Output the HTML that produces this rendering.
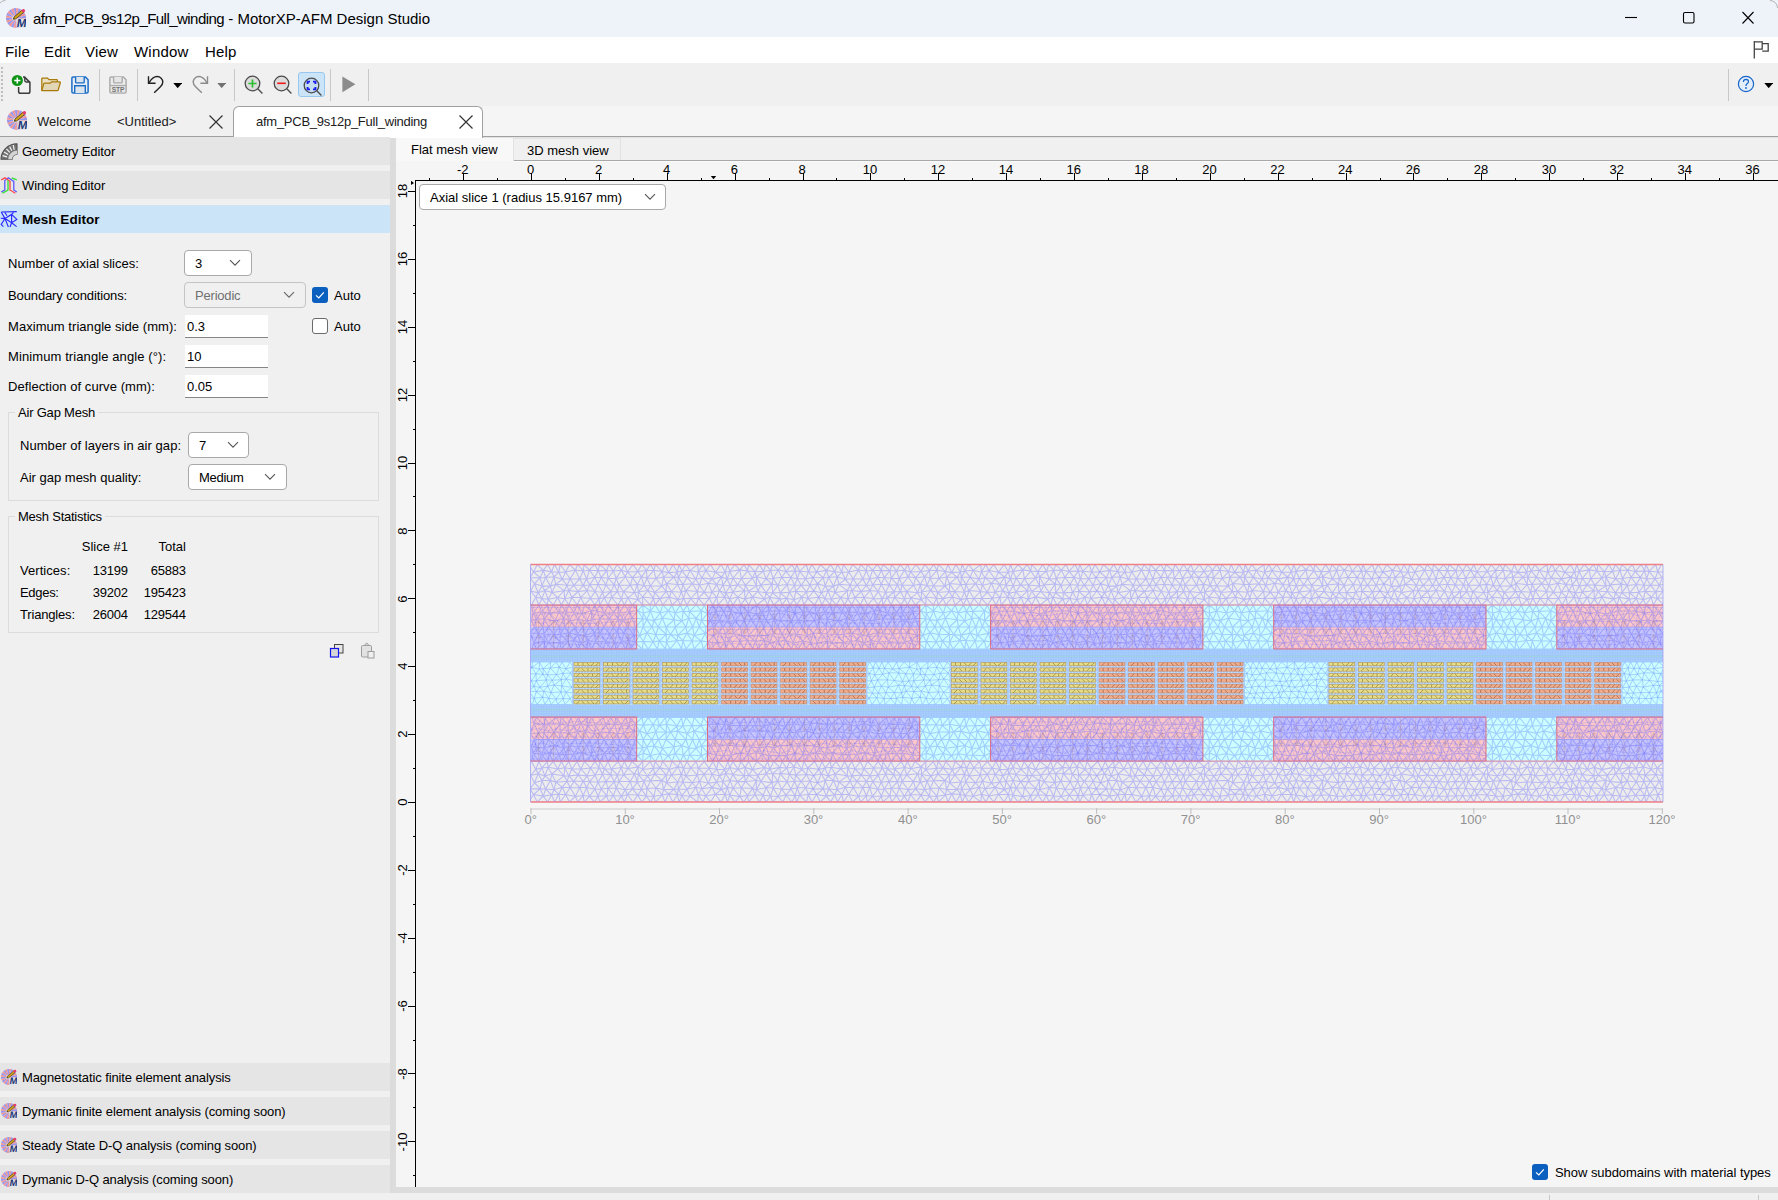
<!DOCTYPE html><html><head><meta charset="utf-8"><title>MotorXP-AFM Design Studio</title><style>
*{box-sizing:border-box;margin:0;padding:0}
html,body{width:1778px;height:1200px;overflow:hidden;background:#f0f0f0;font-family:"Liberation Sans",sans-serif;color:#000}
.abs{position:absolute}
.t{position:absolute;white-space:pre;font-size:13px;letter-spacing:0px;line-height:18px;color:#000}
#title{left:0;top:0;width:1778px;height:37px;background:#eef3fa}
#menu{left:0;top:37px;width:1778px;height:26px;background:#fff}
#tool{left:0;top:63px;width:1778px;height:43px;background:#f0f0f0}
.sep{position:absolute;top:69px;width:1px;height:32px;background:#c8c8c8}
.band{position:absolute;left:0;width:390px;height:28px;background:#e5e5e5}
.band .t{left:22px;top:6px}
.combo{position:absolute;background:#fff;border:1px solid #a8a8a8;border-radius:4px}
.combo.dis{background:#f0f0f0;border-color:#c4c4c4}
.inp{position:absolute;background:#fff;border-bottom:1px solid #868686;height:23px;width:83px}
.grp{position:absolute;border:1px solid #dcdcdc}
.cb{position:absolute;width:16px;height:16px;border-radius:3px}
</style></head><body><div style="position:relative;width:1778px;height:1200px;overflow:hidden">
<div id="title" class="abs"></div>
<svg class="abs" style="left:6px;top:8px" width="20" height="20" viewBox="0 0 20 20"><path d="M10 10L20.00 10.20A10 10 0 0 1 19.61 12.78Z" fill="#f09494"/><path d="M10 10L19.61 12.78A10 10 0 0 1 18.56 15.17Z" fill="#9696f0"/><path d="M10 10L18.56 15.17A10 10 0 0 1 16.93 17.21Z" fill="#f09494"/><path d="M10 10L16.93 17.21A10 10 0 0 1 14.83 18.76Z" fill="#9696f0"/><path d="M10 10L14.83 18.76A10 10 0 0 1 12.39 19.71Z" fill="#f09494"/><path d="M10 10L12.39 19.71A10 10 0 0 1 9.80 20.00Z" fill="#9696f0"/><path d="M10 10L9.80 20.00A10 10 0 0 1 7.22 19.61Z" fill="#f09494"/><path d="M10 10L7.22 19.61A10 10 0 0 1 4.83 18.56Z" fill="#9696f0"/><path d="M10 10L4.83 18.56A10 10 0 0 1 2.79 16.93Z" fill="#f09494"/><path d="M10 10L2.79 16.93A10 10 0 0 1 1.24 14.83Z" fill="#9696f0"/><path d="M10 10L1.24 14.83A10 10 0 0 1 0.29 12.39Z" fill="#f09494"/><path d="M10 10L0.29 12.39A10 10 0 0 1 0.00 9.80Z" fill="#9696f0"/><path d="M10 10L0.00 9.80A10 10 0 0 1 0.39 7.22Z" fill="#f09494"/><path d="M10 10L0.39 7.22A10 10 0 0 1 1.44 4.83Z" fill="#9696f0"/><path d="M10 10L1.44 4.83A10 10 0 0 1 3.07 2.79Z" fill="#f09494"/><path d="M10 10L3.07 2.79A10 10 0 0 1 5.17 1.24Z" fill="#9696f0"/><path d="M10 10L5.17 1.24A10 10 0 0 1 7.61 0.29Z" fill="#f09494"/><path d="M10 10L7.61 0.29A10 10 0 0 1 10.20 0.00Z" fill="#9696f0"/><path d="M10 10L10.20 0.00A10 10 0 0 1 12.78 0.39Z" fill="#f09494"/><path d="M10 10L12.78 0.39A10 10 0 0 1 15.17 1.44Z" fill="#9696f0"/><path d="M10 10L15.17 1.44A10 10 0 0 1 17.21 3.07Z" fill="#f09494"/><path d="M10 10L17.21 3.07A10 10 0 0 1 18.76 5.17Z" fill="#9696f0"/><path d="M10 10L18.76 5.17A10 10 0 0 1 19.71 7.61Z" fill="#f09494"/><path d="M10 10L19.71 7.61A10 10 0 0 1 20.00 10.20Z" fill="#9696f0"/><circle cx="8.3" cy="10.2" r="2.3" fill="#e4e4ea"/><rect x="10.3" y="10.6" width="9.7" height="9.2" fill="#e4e4e6"/><text x="13.4" y="19.3" transform="skewX(-9)" font-family="Liberation Sans" font-weight="700" font-size="11.8" fill="#1e3a7a">M</text><path d="M15.6 2.6L17.6 4.6L9.6 11L7.3 11.2L8 9Z" fill="#d4a21a" stroke="#4a3c14" stroke-width="0.8" stroke-linejoin="round"/><path d="M7.3 11.2L7.7 9.9L8.8 10.9Z" fill="#2a2a2a"/><circle cx="17.4" cy="2.7" r="1.7" fill="#e83c70"/></svg>
<div class="t" style="left:33px;top:9px;font-size:15px;letter-spacing:0px;line-height:20px"><span style="letter-spacing:-0.54px">afm_PCB_9s12p_Full_winding</span> - MotorXP-AFM Design Studio</div>
<svg class="abs" style="left:1620px;top:8px" width="150" height="22" viewBox="0 0 150 22"><path d="M5 9.5H17" stroke="#000" stroke-width="1.1"/><rect x="63.5" y="4.5" width="10.5" height="10.5" rx="1.5" fill="none" stroke="#000" stroke-width="1.1"/><path d="M122.5 4L133.5 15.5M133.5 4L122.5 15.5" stroke="#000" stroke-width="1.1"/></svg>
<svg class="abs" style="left:0;top:0" width="1778" height="10" viewBox="0 0 1778 10"><path d="M0 3Q1.6 0.9 5.6 0.2M1770 0.5A7.5 7.5 0 0 1 1777.5 8" fill="none" stroke="#b4b4b4" stroke-width="1"/></svg>
<div id="menu" class="abs"></div>
<div class="t" style="left:5px;top:42px;font-size:15px;letter-spacing:0.2px;line-height:20px">File</div>
<div class="t" style="left:44px;top:42px;font-size:15px;letter-spacing:0.2px;line-height:20px">Edit</div>
<div class="t" style="left:85px;top:42px;font-size:15px;letter-spacing:0.2px;line-height:20px">View</div>
<div class="t" style="left:134px;top:42px;font-size:15px;letter-spacing:0.2px;line-height:20px">Window</div>
<div class="t" style="left:205px;top:42px;font-size:15px;letter-spacing:0.2px;line-height:20px">Help</div>
<svg class="abs" style="left:1750px;top:39px" width="22" height="22" viewBox="0 0 22 22"><path d="M4.3 2V19.5" stroke="#444" stroke-width="1.3"/><path d="M4.3 2.8H12.2V10.2H4.3" fill="none" stroke="#444" stroke-width="1.3"/><path d="M12.2 4.6H18.2V12.2H12.2" fill="none" stroke="#444" stroke-width="1.3"/></svg>
<div id="tool" class="abs"></div>
<div class="abs" style="left:1px;top:67px;width:2px;height:34px;background:repeating-linear-gradient(#bdbdbd 0 2px,#f0f0f0 2px 4px)"></div>
<svg class="abs" style="left:11.3px;top:73.7px" width="22" height="22" viewBox="0 0 22 22"><path d="M12 3.1H13.6L18.9 8.4V17.4Q18.9 19.2 17.1 19.2H9.4Q7.6 19.2 7.6 17.4V13" fill="none" stroke="#3c3c3c" stroke-width="1.5"/><path d="M13.8 3.4V6.6Q13.8 8 15.2 8H18.6" fill="none" stroke="#3c3c3c" stroke-width="1.4"/><circle cx="6.3" cy="6.5" r="5.6" fill="#0f9416"/><path d="M6.3 3.4V9.6M3.2 6.5H9.4" stroke="#fff" stroke-width="1.5"/></svg>
<svg class="abs" style="left:40px;top:76px" width="22" height="18" viewBox="0 0 22 18"><path d="M1.8 14.6V2.8Q1.8 2 2.6 2H7.4L9 3.6H16.6Q17.4 3.6 17.4 4.4V6.4" fill="#eae0c4" stroke="#a87a08" stroke-width="1.25" stroke-linejoin="round"/><path d="M1.8 14.6L3.8 7.6Q4 7 4.7 7H10.4L11.8 5.8H19.6Q20.6 5.8 20.3 6.8L18.2 14Q18 14.6 17.3 14.6Z" fill="#e2d6b6" stroke="#a87a08" stroke-width="1.25" stroke-linejoin="round"/></svg>
<svg class="abs" style="left:71px;top:76px" width="18" height="18" viewBox="0 0 18 18"><path d="M2 0.9H14.2L17.1 3.8V15.8Q17.1 17.1 15.8 17.1H2.2Q0.9 17.1 0.9 15.8V2Q0.9 0.9 2 0.9Z" fill="#e6ecf4" stroke="#1e6ec8" stroke-width="1.5" stroke-linejoin="round"/><path d="M4.6 1V5.9Q4.6 6.9 5.6 6.9H12.2Q13.2 6.9 13.2 5.9V1" fill="#dce4ee" stroke="#1e6ec8" stroke-width="1.4"/><path d="M3.7 17V9.8H14.3V17" fill="#dce4ee" stroke="#1e6ec8" stroke-width="1.4"/></svg>
<div class="sep" style="left:99px"></div>
<svg class="abs" style="left:109px;top:76px" width="18" height="18" viewBox="0 0 18 18"><path d="M2 0.9H14.2L17.1 3.8V15.8Q17.1 17.1 15.8 17.1H2.2Q0.9 17.1 0.9 15.8V2Q0.9 0.9 2 0.9Z" fill="#ececec" stroke="#acacac" stroke-width="1.5" stroke-linejoin="round"/><path d="M4.6 1V5.9Q4.6 6.9 5.6 6.9H12.2Q13.2 6.9 13.2 5.9V1" fill="#e6e6e6" stroke="#acacac" stroke-width="1.4"/><path d="M1 9.6H17" stroke="#acacac" stroke-width="1.4"/><rect x="2.2" y="10.6" width="13.6" height="5.6" fill="#e6e6e6"/><text x="9" y="15.9" text-anchor="middle" font-family="Liberation Sans" font-weight="700" font-size="6.7" letter-spacing="-0.25" fill="#727272">STP</text></svg>
<div class="sep" style="left:137px"></div>
<svg class="abs" style="left:146px;top:75px" width="20" height="20" viewBox="0 0 20 20"><g><path d="M2.5 1.2V8.2H9.6" fill="none" stroke="#222" stroke-width="1.4"/><path d="M3 7.8Q6.6 1.5 11.2 1.5A5.6 5.6 0 0 1 16.8 7.1Q16.8 9.6 14.4 11.8L8.2 17.8" fill="none" stroke="#222" stroke-width="1.4"/></g></svg>
<svg class="abs" style="left:172.8px;top:82.8px" width="9.4" height="5.3" viewBox="0 0 10 6"><path d="M0 0H10L5 5.8Z" fill="#000"/></svg>
<svg class="abs" style="left:190px;top:75px" width="20" height="20" viewBox="0 0 20 20"><g transform="translate(20,0) scale(-1,1)"><path d="M2.5 1.2V8.2H9.6" fill="none" stroke="#8a8a8a" stroke-width="1.4"/><path d="M3 7.8Q6.6 1.5 11.2 1.5A5.6 5.6 0 0 1 16.8 7.1Q16.8 9.6 14.4 11.8L8.2 17.8" fill="none" stroke="#8a8a8a" stroke-width="1.4"/></g></svg>
<svg class="abs" style="left:216.9px;top:82.8px" width="9.4" height="5.3" viewBox="0 0 10 6"><path d="M0 0H10L5 5.8Z" fill="#727272"/></svg>
<div class="sep" style="left:234px"></div>
<svg class="abs" style="left:243.6px;top:75.1px" width="22" height="22" viewBox="0 0 22 22"><circle cx="8.5" cy="8.5" r="7.3" fill="#dcdcdc" stroke="#4a4a4a" stroke-width="1.3"/><path d="M13.8 13.8L18.4 18.4" stroke="#4a4a4a" stroke-width="1.35"/><path d="M8.5 4.4V12.6M4.4 8.5H12.6" stroke="#2bc02b" stroke-width="1.7"/></svg>
<svg class="abs" style="left:272.6px;top:75.1px" width="22" height="22" viewBox="0 0 22 22"><circle cx="8.5" cy="8.5" r="7.3" fill="#dcdcdc" stroke="#4a4a4a" stroke-width="1.3"/><path d="M13.8 13.8L18.4 18.4" stroke="#4a4a4a" stroke-width="1.35"/><path d="M4.2 8.3H12.8" stroke="#f01818" stroke-width="1.6"/></svg>
<div class="abs" style="left:298px;top:72px;width:27px;height:25px;background:#cce4f7;border:1px solid #98c8ef;border-radius:3px"></div>
<svg class="abs" style="left:302.7px;top:76.6px" width="22" height="22" viewBox="0 0 22 22"><circle cx="8.5" cy="8.5" r="7.3" fill="#c4dcf0" stroke="#4a4a4a" stroke-width="1.3"/><path d="M13.8 13.8L18.4 18.4" stroke="#4a4a4a" stroke-width="1.35"/><path d="M4.6 7V4.6H7M10 4.6H12.4V7M12.4 10V12.4H10M7 12.4H4.6V10" fill="none" stroke="#1a1af0" stroke-width="1.9"/></svg>
<div class="sep" style="left:330px"></div>
<svg class="abs" style="left:342px;top:76px" width="14" height="17" viewBox="0 0 14 17"><path d="M0.4 0.4L13.4 8.3L0.4 16.2Z" fill="#8c8c8c"/></svg>
<div class="sep" style="left:368px"></div>
<div class="sep" style="left:1728px"></div>
<svg class="abs" style="left:1737px;top:75px" width="18" height="18" viewBox="0 0 18 18"><circle cx="9" cy="9" r="7.6" fill="#e4eefa" stroke="#1565c8" stroke-width="1.2"/><path d="M6.4 6.9Q6.5 4.4 9 4.4Q11.5 4.5 11.5 6.6Q11.5 7.9 10 8.8Q9 9.5 9 10.9" fill="none" stroke="#1565c8" stroke-width="1.2"/><circle cx="9" cy="13" r="0.9" fill="#1565c8"/></svg>
<svg class="abs" style="left:1763.5px;top:83px" width="9.4" height="5.3" viewBox="0 0 10 6"><path d="M0 0H10L5 5.8Z" fill="#000"/></svg>
<div class="abs" style="left:0;top:106px;width:1778px;height:31px;background:#f0f0f0"></div>
<div class="abs" style="left:483px;top:106px;width:1295px;height:30px;background:#f5f5f5"></div>
<div class="abs" style="left:0;top:136px;width:1778px;height:1px;background:#a0a0a0"></div>
<div class="abs" style="left:0;top:137px;width:1778px;height:1px;background:#e3e3e3"></div>
<svg class="abs" style="left:7px;top:110px" width="20" height="20" viewBox="0 0 20 20"><path d="M10 10L20.00 10.20A10 10 0 0 1 19.61 12.78Z" fill="#f09494"/><path d="M10 10L19.61 12.78A10 10 0 0 1 18.56 15.17Z" fill="#9696f0"/><path d="M10 10L18.56 15.17A10 10 0 0 1 16.93 17.21Z" fill="#f09494"/><path d="M10 10L16.93 17.21A10 10 0 0 1 14.83 18.76Z" fill="#9696f0"/><path d="M10 10L14.83 18.76A10 10 0 0 1 12.39 19.71Z" fill="#f09494"/><path d="M10 10L12.39 19.71A10 10 0 0 1 9.80 20.00Z" fill="#9696f0"/><path d="M10 10L9.80 20.00A10 10 0 0 1 7.22 19.61Z" fill="#f09494"/><path d="M10 10L7.22 19.61A10 10 0 0 1 4.83 18.56Z" fill="#9696f0"/><path d="M10 10L4.83 18.56A10 10 0 0 1 2.79 16.93Z" fill="#f09494"/><path d="M10 10L2.79 16.93A10 10 0 0 1 1.24 14.83Z" fill="#9696f0"/><path d="M10 10L1.24 14.83A10 10 0 0 1 0.29 12.39Z" fill="#f09494"/><path d="M10 10L0.29 12.39A10 10 0 0 1 0.00 9.80Z" fill="#9696f0"/><path d="M10 10L0.00 9.80A10 10 0 0 1 0.39 7.22Z" fill="#f09494"/><path d="M10 10L0.39 7.22A10 10 0 0 1 1.44 4.83Z" fill="#9696f0"/><path d="M10 10L1.44 4.83A10 10 0 0 1 3.07 2.79Z" fill="#f09494"/><path d="M10 10L3.07 2.79A10 10 0 0 1 5.17 1.24Z" fill="#9696f0"/><path d="M10 10L5.17 1.24A10 10 0 0 1 7.61 0.29Z" fill="#f09494"/><path d="M10 10L7.61 0.29A10 10 0 0 1 10.20 0.00Z" fill="#9696f0"/><path d="M10 10L10.20 0.00A10 10 0 0 1 12.78 0.39Z" fill="#f09494"/><path d="M10 10L12.78 0.39A10 10 0 0 1 15.17 1.44Z" fill="#9696f0"/><path d="M10 10L15.17 1.44A10 10 0 0 1 17.21 3.07Z" fill="#f09494"/><path d="M10 10L17.21 3.07A10 10 0 0 1 18.76 5.17Z" fill="#9696f0"/><path d="M10 10L18.76 5.17A10 10 0 0 1 19.71 7.61Z" fill="#f09494"/><path d="M10 10L19.71 7.61A10 10 0 0 1 20.00 10.20Z" fill="#9696f0"/><circle cx="8.3" cy="10.2" r="2.3" fill="#e4e4ea"/><rect x="10.3" y="10.6" width="9.7" height="9.2" fill="#e4e4e6"/><text x="13.4" y="19.3" transform="skewX(-9)" font-family="Liberation Sans" font-weight="700" font-size="11.8" fill="#1e3a7a">M</text><path d="M15.6 2.6L17.6 4.6L9.6 11L7.3 11.2L8 9Z" fill="#d4a21a" stroke="#4a3c14" stroke-width="0.8" stroke-linejoin="round"/><path d="M7.3 11.2L7.7 9.9L8.8 10.9Z" fill="#2a2a2a"/><circle cx="17.4" cy="2.7" r="1.7" fill="#e83c70"/></svg>
<div class="t" style="left:37px;top:113px;color:#202020">Welcome</div>
<div class="t" style="left:117px;top:113px;color:#202020">&lt;Untitled&gt;</div>
<svg class="abs" style="left:209px;top:115px" width="14" height="14" viewBox="0 0 14 14"><path d="M0.5 0.5L13.5 13.5M13.5 0.5L0.5 13.5" stroke="#333" stroke-width="1.2"/></svg>
<div class="abs" style="left:233px;top:106px;width:250px;height:32px;background:#fff;border:1px solid #a0a0a0;border-bottom:none;border-radius:6px 6px 0 0"></div>
<div class="t" style="left:256px;top:113px;letter-spacing:-0.26px;color:#202020">afm_PCB_9s12p_Full_winding</div>
<svg class="abs" style="left:459px;top:115px" width="14" height="14" viewBox="0 0 14 14"><path d="M0.5 0.5L13.5 13.5M13.5 0.5L0.5 13.5" stroke="#333" stroke-width="1.2"/></svg>
<div class="abs" style="left:0;top:138px;width:390px;height:1055px;background:#f0f0f0"></div>
<div class="band" style="top:137px;background:#e5e5e5"><div class="t" style="letter-spacing:-0.1px">Geometry Editor</div></div>
<svg class="abs" style="left:0px;top:143px" width="18" height="17" viewBox="0 0 18 17"><path d="M1 16.2A16 15.5 0 0 1 17 0.8V11.2A5.5 5 0 0 0 12.2 16.2Z" fill="#747474" stroke="#505050" stroke-width="1.1" stroke-linejoin="round"/><path d="M8.2 16.2A9 8.6 0 0 1 17 7.6V11.2A5.5 5 0 0 0 12.2 16.2Z" fill="#d4d4d4"/><path d="M2.6 12.6L7 13.8M4 9L8.2 11.4M6.4 5.8L9.8 9.4M9.6 3.4L11.8 7.8M13.2 2L14.2 6.8" stroke="#f4f4f4" stroke-width="1.2"/></svg>
<div class="band" style="top:171px;background:#e5e5e5"><div class="t" style="letter-spacing:-0.1px">Winding Editor</div></div>
<svg class="abs" style="left:0px;top:177px" width="18" height="17" viewBox="0 0 18 17"><path d="M1.2 15L4.8 13V3.6L8.4 0.8L13.8 4.4V13L16.8 15" fill="none" stroke="#5a5aff" stroke-width="1.3"/><path d="M1.2 2.8L5 0.8L10 4.4V13L15.4 16.2" fill="none" stroke="#ff4a4a" stroke-width="1.3"/><path d="M2.4 16.2L8 13V3.6M11.8 0.8L16.8 2.8" fill="none" stroke="#30e030" stroke-width="1.3"/></svg>
<div class="band" style="top:205px;background:#cce4f7"><div class="t" style="font-weight:700;font-size:13.5px;letter-spacing:0.02px">Mesh Editor</div></div>
<svg class="abs" style="left:0px;top:211px" width="18" height="17" viewBox="0 0 18 17"><path d="M1.2 1L16.8 0.6M1.2 1L5 7.6L1.2 13.4L3.4 15.6M5 7.6L11.6 3.4V11.8L5 7.6M5 7.6L8.4 16M11.6 3.4L16.8 8.4L11.6 11.8L16.6 15.6M11.6 3.4L14 0.8M5 7.6L0.8 7.2M11.6 11.8L10 16M4.6 1L7 4.8" fill="none" stroke="#2a2aff" stroke-width="1.15"/></svg>
<div class="band" style="top:1063px;background:#e5e5e5"><div class="t" style="letter-spacing:-0.1px">Magnetostatic finite element analysis</div></div>
<svg class="abs" style="left:1px;top:1069px" width="16" height="16" viewBox="0 0 20 20"><path d="M10 10L20.00 10.20A10 10 0 0 1 19.61 12.78Z" fill="#f09494"/><path d="M10 10L19.61 12.78A10 10 0 0 1 18.56 15.17Z" fill="#9696f0"/><path d="M10 10L18.56 15.17A10 10 0 0 1 16.93 17.21Z" fill="#f09494"/><path d="M10 10L16.93 17.21A10 10 0 0 1 14.83 18.76Z" fill="#9696f0"/><path d="M10 10L14.83 18.76A10 10 0 0 1 12.39 19.71Z" fill="#f09494"/><path d="M10 10L12.39 19.71A10 10 0 0 1 9.80 20.00Z" fill="#9696f0"/><path d="M10 10L9.80 20.00A10 10 0 0 1 7.22 19.61Z" fill="#f09494"/><path d="M10 10L7.22 19.61A10 10 0 0 1 4.83 18.56Z" fill="#9696f0"/><path d="M10 10L4.83 18.56A10 10 0 0 1 2.79 16.93Z" fill="#f09494"/><path d="M10 10L2.79 16.93A10 10 0 0 1 1.24 14.83Z" fill="#9696f0"/><path d="M10 10L1.24 14.83A10 10 0 0 1 0.29 12.39Z" fill="#f09494"/><path d="M10 10L0.29 12.39A10 10 0 0 1 0.00 9.80Z" fill="#9696f0"/><path d="M10 10L0.00 9.80A10 10 0 0 1 0.39 7.22Z" fill="#f09494"/><path d="M10 10L0.39 7.22A10 10 0 0 1 1.44 4.83Z" fill="#9696f0"/><path d="M10 10L1.44 4.83A10 10 0 0 1 3.07 2.79Z" fill="#f09494"/><path d="M10 10L3.07 2.79A10 10 0 0 1 5.17 1.24Z" fill="#9696f0"/><path d="M10 10L5.17 1.24A10 10 0 0 1 7.61 0.29Z" fill="#f09494"/><path d="M10 10L7.61 0.29A10 10 0 0 1 10.20 0.00Z" fill="#9696f0"/><path d="M10 10L10.20 0.00A10 10 0 0 1 12.78 0.39Z" fill="#f09494"/><path d="M10 10L12.78 0.39A10 10 0 0 1 15.17 1.44Z" fill="#9696f0"/><path d="M10 10L15.17 1.44A10 10 0 0 1 17.21 3.07Z" fill="#f09494"/><path d="M10 10L17.21 3.07A10 10 0 0 1 18.76 5.17Z" fill="#9696f0"/><path d="M10 10L18.76 5.17A10 10 0 0 1 19.71 7.61Z" fill="#f09494"/><path d="M10 10L19.71 7.61A10 10 0 0 1 20.00 10.20Z" fill="#9696f0"/><circle cx="8.3" cy="10.2" r="2.3" fill="#e4e4ea"/><rect x="10.3" y="10.6" width="9.7" height="9.2" fill="#e4e4e6"/><text x="13.4" y="19.3" transform="skewX(-9)" font-family="Liberation Sans" font-weight="700" font-size="11.8" fill="#1e3a7a">M</text><path d="M15.6 2.6L17.6 4.6L9.6 11L7.3 11.2L8 9Z" fill="#d4a21a" stroke="#4a3c14" stroke-width="0.8" stroke-linejoin="round"/><path d="M7.3 11.2L7.7 9.9L8.8 10.9Z" fill="#2a2a2a"/><circle cx="17.4" cy="2.7" r="1.7" fill="#e83c70"/></svg>
<div class="band" style="top:1097px;background:#e5e5e5"><div class="t" style="letter-spacing:-0.1px">Dymanic finite element analysis (coming soon)</div></div>
<svg class="abs" style="left:1px;top:1103px" width="16" height="16" viewBox="0 0 20 20"><path d="M10 10L20.00 10.20A10 10 0 0 1 19.61 12.78Z" fill="#f09494"/><path d="M10 10L19.61 12.78A10 10 0 0 1 18.56 15.17Z" fill="#9696f0"/><path d="M10 10L18.56 15.17A10 10 0 0 1 16.93 17.21Z" fill="#f09494"/><path d="M10 10L16.93 17.21A10 10 0 0 1 14.83 18.76Z" fill="#9696f0"/><path d="M10 10L14.83 18.76A10 10 0 0 1 12.39 19.71Z" fill="#f09494"/><path d="M10 10L12.39 19.71A10 10 0 0 1 9.80 20.00Z" fill="#9696f0"/><path d="M10 10L9.80 20.00A10 10 0 0 1 7.22 19.61Z" fill="#f09494"/><path d="M10 10L7.22 19.61A10 10 0 0 1 4.83 18.56Z" fill="#9696f0"/><path d="M10 10L4.83 18.56A10 10 0 0 1 2.79 16.93Z" fill="#f09494"/><path d="M10 10L2.79 16.93A10 10 0 0 1 1.24 14.83Z" fill="#9696f0"/><path d="M10 10L1.24 14.83A10 10 0 0 1 0.29 12.39Z" fill="#f09494"/><path d="M10 10L0.29 12.39A10 10 0 0 1 0.00 9.80Z" fill="#9696f0"/><path d="M10 10L0.00 9.80A10 10 0 0 1 0.39 7.22Z" fill="#f09494"/><path d="M10 10L0.39 7.22A10 10 0 0 1 1.44 4.83Z" fill="#9696f0"/><path d="M10 10L1.44 4.83A10 10 0 0 1 3.07 2.79Z" fill="#f09494"/><path d="M10 10L3.07 2.79A10 10 0 0 1 5.17 1.24Z" fill="#9696f0"/><path d="M10 10L5.17 1.24A10 10 0 0 1 7.61 0.29Z" fill="#f09494"/><path d="M10 10L7.61 0.29A10 10 0 0 1 10.20 0.00Z" fill="#9696f0"/><path d="M10 10L10.20 0.00A10 10 0 0 1 12.78 0.39Z" fill="#f09494"/><path d="M10 10L12.78 0.39A10 10 0 0 1 15.17 1.44Z" fill="#9696f0"/><path d="M10 10L15.17 1.44A10 10 0 0 1 17.21 3.07Z" fill="#f09494"/><path d="M10 10L17.21 3.07A10 10 0 0 1 18.76 5.17Z" fill="#9696f0"/><path d="M10 10L18.76 5.17A10 10 0 0 1 19.71 7.61Z" fill="#f09494"/><path d="M10 10L19.71 7.61A10 10 0 0 1 20.00 10.20Z" fill="#9696f0"/><circle cx="8.3" cy="10.2" r="2.3" fill="#e4e4ea"/><rect x="10.3" y="10.6" width="9.7" height="9.2" fill="#e4e4e6"/><text x="13.4" y="19.3" transform="skewX(-9)" font-family="Liberation Sans" font-weight="700" font-size="11.8" fill="#1e3a7a">M</text><path d="M15.6 2.6L17.6 4.6L9.6 11L7.3 11.2L8 9Z" fill="#d4a21a" stroke="#4a3c14" stroke-width="0.8" stroke-linejoin="round"/><path d="M7.3 11.2L7.7 9.9L8.8 10.9Z" fill="#2a2a2a"/><circle cx="17.4" cy="2.7" r="1.7" fill="#e83c70"/></svg>
<div class="band" style="top:1131px;background:#e5e5e5"><div class="t" style="letter-spacing:-0.1px">Steady State D-Q analysis (coming soon)</div></div>
<svg class="abs" style="left:1px;top:1137px" width="16" height="16" viewBox="0 0 20 20"><path d="M10 10L20.00 10.20A10 10 0 0 1 19.61 12.78Z" fill="#f09494"/><path d="M10 10L19.61 12.78A10 10 0 0 1 18.56 15.17Z" fill="#9696f0"/><path d="M10 10L18.56 15.17A10 10 0 0 1 16.93 17.21Z" fill="#f09494"/><path d="M10 10L16.93 17.21A10 10 0 0 1 14.83 18.76Z" fill="#9696f0"/><path d="M10 10L14.83 18.76A10 10 0 0 1 12.39 19.71Z" fill="#f09494"/><path d="M10 10L12.39 19.71A10 10 0 0 1 9.80 20.00Z" fill="#9696f0"/><path d="M10 10L9.80 20.00A10 10 0 0 1 7.22 19.61Z" fill="#f09494"/><path d="M10 10L7.22 19.61A10 10 0 0 1 4.83 18.56Z" fill="#9696f0"/><path d="M10 10L4.83 18.56A10 10 0 0 1 2.79 16.93Z" fill="#f09494"/><path d="M10 10L2.79 16.93A10 10 0 0 1 1.24 14.83Z" fill="#9696f0"/><path d="M10 10L1.24 14.83A10 10 0 0 1 0.29 12.39Z" fill="#f09494"/><path d="M10 10L0.29 12.39A10 10 0 0 1 0.00 9.80Z" fill="#9696f0"/><path d="M10 10L0.00 9.80A10 10 0 0 1 0.39 7.22Z" fill="#f09494"/><path d="M10 10L0.39 7.22A10 10 0 0 1 1.44 4.83Z" fill="#9696f0"/><path d="M10 10L1.44 4.83A10 10 0 0 1 3.07 2.79Z" fill="#f09494"/><path d="M10 10L3.07 2.79A10 10 0 0 1 5.17 1.24Z" fill="#9696f0"/><path d="M10 10L5.17 1.24A10 10 0 0 1 7.61 0.29Z" fill="#f09494"/><path d="M10 10L7.61 0.29A10 10 0 0 1 10.20 0.00Z" fill="#9696f0"/><path d="M10 10L10.20 0.00A10 10 0 0 1 12.78 0.39Z" fill="#f09494"/><path d="M10 10L12.78 0.39A10 10 0 0 1 15.17 1.44Z" fill="#9696f0"/><path d="M10 10L15.17 1.44A10 10 0 0 1 17.21 3.07Z" fill="#f09494"/><path d="M10 10L17.21 3.07A10 10 0 0 1 18.76 5.17Z" fill="#9696f0"/><path d="M10 10L18.76 5.17A10 10 0 0 1 19.71 7.61Z" fill="#f09494"/><path d="M10 10L19.71 7.61A10 10 0 0 1 20.00 10.20Z" fill="#9696f0"/><circle cx="8.3" cy="10.2" r="2.3" fill="#e4e4ea"/><rect x="10.3" y="10.6" width="9.7" height="9.2" fill="#e4e4e6"/><text x="13.4" y="19.3" transform="skewX(-9)" font-family="Liberation Sans" font-weight="700" font-size="11.8" fill="#1e3a7a">M</text><path d="M15.6 2.6L17.6 4.6L9.6 11L7.3 11.2L8 9Z" fill="#d4a21a" stroke="#4a3c14" stroke-width="0.8" stroke-linejoin="round"/><path d="M7.3 11.2L7.7 9.9L8.8 10.9Z" fill="#2a2a2a"/><circle cx="17.4" cy="2.7" r="1.7" fill="#e83c70"/></svg>
<div class="band" style="top:1165px;background:#e5e5e5"><div class="t" style="letter-spacing:-0.1px">Dymanic D-Q analysis (coming soon)</div></div>
<svg class="abs" style="left:1px;top:1171px" width="16" height="16" viewBox="0 0 20 20"><path d="M10 10L20.00 10.20A10 10 0 0 1 19.61 12.78Z" fill="#f09494"/><path d="M10 10L19.61 12.78A10 10 0 0 1 18.56 15.17Z" fill="#9696f0"/><path d="M10 10L18.56 15.17A10 10 0 0 1 16.93 17.21Z" fill="#f09494"/><path d="M10 10L16.93 17.21A10 10 0 0 1 14.83 18.76Z" fill="#9696f0"/><path d="M10 10L14.83 18.76A10 10 0 0 1 12.39 19.71Z" fill="#f09494"/><path d="M10 10L12.39 19.71A10 10 0 0 1 9.80 20.00Z" fill="#9696f0"/><path d="M10 10L9.80 20.00A10 10 0 0 1 7.22 19.61Z" fill="#f09494"/><path d="M10 10L7.22 19.61A10 10 0 0 1 4.83 18.56Z" fill="#9696f0"/><path d="M10 10L4.83 18.56A10 10 0 0 1 2.79 16.93Z" fill="#f09494"/><path d="M10 10L2.79 16.93A10 10 0 0 1 1.24 14.83Z" fill="#9696f0"/><path d="M10 10L1.24 14.83A10 10 0 0 1 0.29 12.39Z" fill="#f09494"/><path d="M10 10L0.29 12.39A10 10 0 0 1 0.00 9.80Z" fill="#9696f0"/><path d="M10 10L0.00 9.80A10 10 0 0 1 0.39 7.22Z" fill="#f09494"/><path d="M10 10L0.39 7.22A10 10 0 0 1 1.44 4.83Z" fill="#9696f0"/><path d="M10 10L1.44 4.83A10 10 0 0 1 3.07 2.79Z" fill="#f09494"/><path d="M10 10L3.07 2.79A10 10 0 0 1 5.17 1.24Z" fill="#9696f0"/><path d="M10 10L5.17 1.24A10 10 0 0 1 7.61 0.29Z" fill="#f09494"/><path d="M10 10L7.61 0.29A10 10 0 0 1 10.20 0.00Z" fill="#9696f0"/><path d="M10 10L10.20 0.00A10 10 0 0 1 12.78 0.39Z" fill="#f09494"/><path d="M10 10L12.78 0.39A10 10 0 0 1 15.17 1.44Z" fill="#9696f0"/><path d="M10 10L15.17 1.44A10 10 0 0 1 17.21 3.07Z" fill="#f09494"/><path d="M10 10L17.21 3.07A10 10 0 0 1 18.76 5.17Z" fill="#9696f0"/><path d="M10 10L18.76 5.17A10 10 0 0 1 19.71 7.61Z" fill="#f09494"/><path d="M10 10L19.71 7.61A10 10 0 0 1 20.00 10.20Z" fill="#9696f0"/><circle cx="8.3" cy="10.2" r="2.3" fill="#e4e4ea"/><rect x="10.3" y="10.6" width="9.7" height="9.2" fill="#e4e4e6"/><text x="13.4" y="19.3" transform="skewX(-9)" font-family="Liberation Sans" font-weight="700" font-size="11.8" fill="#1e3a7a">M</text><path d="M15.6 2.6L17.6 4.6L9.6 11L7.3 11.2L8 9Z" fill="#d4a21a" stroke="#4a3c14" stroke-width="0.8" stroke-linejoin="round"/><path d="M7.3 11.2L7.7 9.9L8.8 10.9Z" fill="#2a2a2a"/><circle cx="17.4" cy="2.7" r="1.7" fill="#e83c70"/></svg>
<div class="t" style="left:8px;top:255px">Number of axial slices:</div>
<div class="combo" style="left:184px;top:250px;width:68px;height:26px"><div class="t" style="left:10px;top:4px">3</div></div><svg class="abs" style="left:229px;top:259px" width="12" height="8" viewBox="0 0 12 8"><path d="M1 1.2L6 6.2L11 1.2" fill="none" stroke="#555" stroke-width="1.1"/></svg>
<div class="t" style="left:8px;top:287px;letter-spacing:-0.12px">Boundary conditions:</div>
<div class="combo dis" style="left:184px;top:282px;width:122px;height:26px"><div class="t" style="left:10px;top:4px;color:#707070;letter-spacing:-0.2px">Periodic</div></div><svg class="abs" style="left:283px;top:291px" width="12" height="8" viewBox="0 0 12 8"><path d="M1 1.2L6 6.2L11 1.2" fill="none" stroke="#666" stroke-width="1.1"/></svg>
<div class="cb" style="left:312px;top:287px;background:#0a5fbf"></div><svg class="abs" style="left:312px;top:287px" width="16" height="16" viewBox="0 0 16 16"><path d="M4 8.4L6.8 11L11.8 5.4" fill="none" stroke="#fff" stroke-width="1.2"/></svg>
<div class="t" style="left:334px;top:287px">Auto</div>
<div class="t" style="left:8px;top:318px;letter-spacing:0.05px">Maximum triangle side (mm):</div>
<div class="inp" style="left:185px;top:315px"><div class="t" style="left:2px;top:3px">0.3</div></div>
<div class="cb" style="left:312px;top:318px;background:#fff;border:1px solid #6a6a6a"></div>
<div class="t" style="left:334px;top:318px">Auto</div>
<div class="t" style="left:8px;top:348px;letter-spacing:0.1px">Minimum triangle angle (°):</div>
<div class="inp" style="left:185px;top:345px"><div class="t" style="left:2px;top:3px">10</div></div>
<div class="t" style="left:8px;top:378px;letter-spacing:0.07px">Deflection of curve (mm):</div>
<div class="inp" style="left:185px;top:375px"><div class="t" style="left:2px;top:3px">0.05</div></div>
<div class="grp" style="left:8px;top:412px;width:371px;height:89px"></div>
<div class="t" style="left:15px;top:404px;background:#f0f0f0;padding:0 3px;letter-spacing:-0.2px">Air Gap Mesh</div>
<div class="t" style="left:20px;top:437px;letter-spacing:0.05px">Number of layers in air gap:</div>
<div class="combo" style="left:188px;top:432px;width:61px;height:26px"><div class="t" style="left:10px;top:4px">7</div></div><svg class="abs" style="left:227px;top:441px" width="12" height="8" viewBox="0 0 12 8"><path d="M1 1.2L6 6.2L11 1.2" fill="none" stroke="#555" stroke-width="1.1"/></svg>
<div class="t" style="left:20px;top:469px">Air gap mesh quality:</div>
<div class="combo" style="left:188px;top:464px;width:99px;height:26px"><div class="t" style="left:10px;top:4px;letter-spacing:-0.28px">Medium</div></div><svg class="abs" style="left:264px;top:473px" width="12" height="8" viewBox="0 0 12 8"><path d="M1 1.2L6 6.2L11 1.2" fill="none" stroke="#555" stroke-width="1.1"/></svg>
<div class="grp" style="left:8px;top:516px;width:371px;height:117px"></div>
<div class="t" style="left:15px;top:508px;background:#f0f0f0;padding:0 3px;letter-spacing:-0.24px">Mesh Statistics</div>
<div class="t" style="left:8px;width:120px;text-align:right;top:538px;letter-spacing:0px">Slice #1</div>
<div class="t" style="left:66px;width:120px;text-align:right;top:538px;letter-spacing:0px">Total</div>
<div class="t" style="left:20px;top:562px;letter-spacing:0.05px">Vertices:</div>
<div class="t" style="left:7.78px;width:120px;text-align:right;top:562px;letter-spacing:-0.22px">13199</div>
<div class="t" style="left:65.78px;width:120px;text-align:right;top:562px;letter-spacing:-0.22px">65883</div>
<div class="t" style="left:20px;top:584px;letter-spacing:-0.3px">Edges:</div>
<div class="t" style="left:7.78px;width:120px;text-align:right;top:584px;letter-spacing:-0.22px">39202</div>
<div class="t" style="left:65.78px;width:120px;text-align:right;top:584px;letter-spacing:-0.22px">195423</div>
<div class="t" style="left:20px;top:606px;letter-spacing:-0.17px">Triangles:</div>
<div class="t" style="left:7.78px;width:120px;text-align:right;top:606px;letter-spacing:-0.22px">26004</div>
<div class="t" style="left:65.78px;width:120px;text-align:right;top:606px;letter-spacing:-0.22px">129544</div>
<svg class="abs" style="left:329px;top:643px" width="16" height="16" viewBox="0 0 16 16"><rect x="5.5" y="1.5" width="8.5" height="8.5" fill="#e6e6e6" stroke="#444" stroke-width="1"/><rect x="1.5" y="5.5" width="8" height="8.5" fill="#d6d6d6" stroke="#1414ee" stroke-width="1.2"/></svg>
<svg class="abs" style="left:360px;top:642px" width="16" height="17" viewBox="0 0 16 17"><rect x="1.5" y="3.5" width="10" height="11.5" rx="1" fill="#e2e2e2" stroke="#9c9c9c" stroke-width="1"/><path d="M4.5 3.5L6.5 1H7L9 3.5Z" fill="#dcdcdc" stroke="#9c9c9c" stroke-width="0.9"/><rect x="8" y="9.5" width="6" height="6.5" fill="#efefef" stroke="#9c9c9c" stroke-width="1"/></svg>
<div class="abs" style="left:390px;top:138px;width:6px;height:1055px;background:#dcdcdc"></div>
<div class="abs" style="left:396px;top:138px;width:1382px;height:1049px;background:#f5f5f5"></div>
<div class="abs" style="left:396px;top:138px;width:1382px;height:22px;background:#f0f0f0"></div>
<div class="abs" style="left:396px;top:138px;width:118px;height:23px;background:#f8f8f8"></div>
<div class="abs" style="left:513px;top:138px;width:108px;height:23px;background:#f0f0f0;border:1px solid #e2e2e2"></div>
<div class="abs" style="left:514px;top:160px;width:1264px;height:1px;background:#a8a8a8"></div><div class="abs" style="left:514px;top:161px;width:1264px;height:1px;background:#fbfbfb"></div>
<div class="t" style="left:411px;top:141px">Flat mesh view</div>
<div class="t" style="left:527px;top:142px">3D mesh view</div>
<svg class="abs" style="left:397px;top:160px" width="1381" height="1030" viewBox="397 160 1381 1030" shape-rendering="crispEdges"><path d="M415.5 180V1187" stroke="#000" stroke-width="1"/><path d="M415 180.5H1778" stroke="#000" stroke-width="1"/><path d="M429.5 178V180M463.5 173V180M497.5 178V180M531.5 173V180M565.5 178V180M599.5 173V180M633.5 178V180M667.5 173V180M701.5 178V180M735.5 173V180M769.5 178V180M803.5 173V180M836.5 178V180M870.5 173V180M904.5 178V180M938.5 173V180M972.5 178V180M1006.5 173V180M1040.5 178V180M1074.5 173V180M1108.5 178V180M1142.5 173V180M1176.5 178V180M1210.5 173V180M1244.5 178V180M1278.5 173V180M1312.5 178V180M1346.5 173V180M1380.5 178V180M1413.5 173V180M1447.5 178V180M1481.5 173V180M1515.5 178V180M1549.5 173V180M1583.5 178V180M1617.5 173V180M1651.5 178V180M1685.5 173V180M1719.5 178V180M1753.5 173V180M1787.5 178V180M413 1175.5H415M408 1141.5H415M413 1107.5H415M408 1073.5H415M413 1040.5H415M408 1006.5H415M413 972.5H415M408 938.5H415M413 904.5H415M408 870.5H415M413 836.5H415M408 802.5H415M413 768.5H415M408 734.5H415M413 700.5H415M408 666.5H415M413 632.5H415M408 598.5H415M413 564.5H415M408 530.5H415M413 496.5H415M408 463.5H415M413 429.5H415M408 395.5H415M413 361.5H415M408 327.5H415M413 293.5H415M408 259.5H415M413 225.5H415M408 191.5H415" stroke="#000" stroke-width="1"/><g shape-rendering="geometricPrecision"><path d="M710.8 175.9H716.2L713.5 179.3Z" fill="#000"/><path d="M411 180.8L414 182.9L411 185Z" fill="#000"/></g></svg>
<div class="t" style="left:432.8px;width:60px;text-align:center;top:161px">-2</div>
<div class="t" style="left:500.7px;width:60px;text-align:center;top:161px">0</div>
<div class="t" style="left:568.6px;width:60px;text-align:center;top:161px">2</div>
<div class="t" style="left:636.5px;width:60px;text-align:center;top:161px">4</div>
<div class="t" style="left:704.3px;width:60px;text-align:center;top:161px">6</div>
<div class="t" style="left:772.2px;width:60px;text-align:center;top:161px">8</div>
<div class="t" style="left:840.1px;width:60px;text-align:center;top:161px">10</div>
<div class="t" style="left:908.0px;width:60px;text-align:center;top:161px">12</div>
<div class="t" style="left:975.9px;width:60px;text-align:center;top:161px">14</div>
<div class="t" style="left:1043.7px;width:60px;text-align:center;top:161px">16</div>
<div class="t" style="left:1111.6px;width:60px;text-align:center;top:161px">18</div>
<div class="t" style="left:1179.5px;width:60px;text-align:center;top:161px">20</div>
<div class="t" style="left:1247.4px;width:60px;text-align:center;top:161px">22</div>
<div class="t" style="left:1315.3px;width:60px;text-align:center;top:161px">24</div>
<div class="t" style="left:1383.1px;width:60px;text-align:center;top:161px">26</div>
<div class="t" style="left:1451.0px;width:60px;text-align:center;top:161px">28</div>
<div class="t" style="left:1518.9px;width:60px;text-align:center;top:161px">30</div>
<div class="t" style="left:1586.8px;width:60px;text-align:center;top:161px">32</div>
<div class="t" style="left:1654.7px;width:60px;text-align:center;top:161px">34</div>
<div class="t" style="left:1722.5px;width:60px;text-align:center;top:161px">36</div>
<div class="t" style="left:373px;width:60px;text-align:center;top:1132.6px;transform:rotate(-90deg)">-10</div>
<div class="t" style="left:373px;width:60px;text-align:center;top:1064.7px;transform:rotate(-90deg)">-8</div>
<div class="t" style="left:373px;width:60px;text-align:center;top:996.8px;transform:rotate(-90deg)">-6</div>
<div class="t" style="left:373px;width:60px;text-align:center;top:929.0px;transform:rotate(-90deg)">-4</div>
<div class="t" style="left:373px;width:60px;text-align:center;top:861.1px;transform:rotate(-90deg)">-2</div>
<div class="t" style="left:373px;width:60px;text-align:center;top:793.2px;transform:rotate(-90deg)">0</div>
<div class="t" style="left:373px;width:60px;text-align:center;top:725.3px;transform:rotate(-90deg)">2</div>
<div class="t" style="left:373px;width:60px;text-align:center;top:657.4px;transform:rotate(-90deg)">4</div>
<div class="t" style="left:373px;width:60px;text-align:center;top:589.6px;transform:rotate(-90deg)">6</div>
<div class="t" style="left:373px;width:60px;text-align:center;top:521.7px;transform:rotate(-90deg)">8</div>
<div class="t" style="left:373px;width:60px;text-align:center;top:453.8px;transform:rotate(-90deg)">10</div>
<div class="t" style="left:373px;width:60px;text-align:center;top:385.9px;transform:rotate(-90deg)">12</div>
<div class="t" style="left:373px;width:60px;text-align:center;top:318.0px;transform:rotate(-90deg)">14</div>
<div class="t" style="left:373px;width:60px;text-align:center;top:250.2px;transform:rotate(-90deg)">16</div>
<div class="t" style="left:373px;width:60px;text-align:center;top:182.3px;transform:rotate(-90deg)">18</div>
<div class="combo" style="left:419px;top:184px;width:247px;height:26px"><div class="t" style="left:10px;top:4px">Axial slice 1 (radius 15.9167 mm)</div></div><svg class="abs" style="left:644px;top:193px" width="12" height="8" viewBox="0 0 12 8"><path d="M1 1.2L6 6.2L11 1.2" fill="none" stroke="#555" stroke-width="1.1"/></svg>
<svg class="abs" style="left:520px;top:555px" width="1180" height="280" viewBox="520 555 1180 280"><defs><path id="mt" d="M-1.8 0.0L6.7 0.0L17.1 0.0L24.0 0.0L29.7 0.0L39.0 0.0L47.1 0.0L53.6 0.0L63.9 0.0L69.1 0.0L78.2 0.0L86.6 0.0L94.1 0.0L102.6 0.0L111.2 0.0L120.0 0.0L124.9 0.0L134.4 0.0L142.4 0.0L148.5 0.0L155.1 0.0L167.2 0.0L172.1 0.0L180.1 0.0L190.5 0.0L197.0 0.0L204.4 0.0L213.5 0.0L218.1 0.0L229.0 0.0L235.4 0.0L242.0 0.0L252.4 0.0L261.4 0.0L266.1 0.0L275.8 0.0L269.2 6.8L266.1 0.0L264.7 6.4L261.4 0.0L255.5 6.9L252.4 0.0L247.7 5.6L242.0 0.0L240.1 5.9L235.4 0.0L232.8 6.8L229.0 0.0L224.5 7.3L218.1 0.0L217.1 6.4L213.5 0.0L209.3 5.4L204.4 0.0L199.3 6.9L197.0 0.0L194.7 7.4L190.5 0.0L184.8 7.8L180.1 0.0L175.3 6.1L172.1 0.0L167.8 7.8L167.2 0.0L159.4 5.8L155.1 0.0L151.4 6.4L148.5 0.0L146.8 7.6L142.4 0.0L138.1 8.1L134.4 0.0L131.8 7.1L124.9 0.0L123.4 5.8L120.0 0.0L115.9 5.9L111.2 0.0L107.3 6.9L102.6 0.0L96.9 7.5L94.1 0.0L90.9 5.8L86.6 0.0L82.9 6.5L78.2 0.0L76.3 6.1L69.1 0.0L67.7 6.1L63.9 0.0L58.9 5.7L53.6 0.0L52.7 6.4L47.1 0.0L44.9 5.6L39.0 0.0L35.1 7.5L29.7 0.0L28.3 7.7L24.0 0.0L21.1 7.2L17.1 0.0L12.8 5.9L6.7 0.0L3.0 7.5L-1.8 0.0M275.8 0.0L277.9 7.5L269.2 6.8L264.7 6.4L255.5 6.9L247.7 5.6L240.1 5.9L232.8 6.8L224.5 7.3L217.1 6.4L209.3 5.4L199.3 6.9L194.7 7.4L184.8 7.8L175.3 6.1L167.8 7.8L159.4 5.8L151.4 6.4L146.8 7.6L138.1 8.1L131.8 7.1L123.4 5.8L115.9 5.9L107.3 6.9L96.9 7.5L90.9 5.8L82.9 6.5L76.3 6.1L67.7 6.1L58.9 5.7L52.7 6.4L44.9 5.6L35.1 7.5L28.3 7.7L21.1 7.2L12.8 5.9L3.0 7.5L-0.5 13.1L9.7 13.2L3.0 7.5M275.8 0.0L281.3 0.0L277.9 7.5L275.2 14.3L269.2 6.8L266.8 14.3L264.7 6.4L260.4 12.9L255.5 6.9L251.2 12.8L247.7 5.6L242.6 14.0L240.1 5.9L235.6 14.5L232.8 6.8L225.9 12.2L224.5 7.3L222.1 13.6L217.1 6.4L210.9 14.3L209.3 5.4L202.5 13.8L199.3 6.9L196.8 14.6L194.7 7.4L191.0 12.4L184.8 7.8L181.6 14.6L175.3 6.1L171.4 13.2L167.8 7.8L165.3 14.8L159.4 5.8L156.6 12.7L151.4 6.4L147.9 12.8L146.8 7.6L143.5 12.7L138.1 8.1L133.0 12.6L131.8 7.1L125.4 14.0L123.4 5.8L116.5 13.5L115.9 5.9L111.0 12.3L107.3 6.9L102.0 13.2L96.9 7.5L94.7 12.3L90.9 5.8L85.7 13.9L82.9 6.5L77.6 13.7L76.3 6.1L70.7 13.0L67.7 6.1L64.3 12.8L58.9 5.7L56.1 14.4L52.7 6.4L49.2 14.5L44.9 5.6L39.6 14.2L35.1 7.5L31.7 14.8L28.3 7.7L23.5 12.3L21.1 7.2L15.1 13.0L12.8 5.9L9.7 13.2L15.1 13.0L23.5 12.3L31.7 14.8L39.6 14.2L49.2 14.5L56.1 14.4L64.3 12.8L70.7 13.0L77.6 13.7L85.7 13.9L94.7 12.3L102.0 13.2L111.0 12.3L116.5 13.5L125.4 14.0L133.0 12.6L143.5 12.7L147.9 12.8L156.6 12.7L165.3 14.8L171.4 13.2L181.6 14.6L191.0 12.4L196.8 14.6L202.5 13.8L210.9 14.3L222.1 13.6L225.9 12.2L235.6 14.5L242.6 14.0L251.2 12.8L260.4 12.9L266.8 14.3L275.2 14.3L270.7 20.7L266.8 14.3L264.1 20.8L260.4 12.9L256.6 20.1L251.2 12.8L247.4 20.9L242.6 14.0L241.6 19.4L235.6 14.5L230.4 20.6L225.9 12.2L225.9 21.4L222.1 13.6L214.8 20.6L210.9 14.3L207.1 20.4L202.5 13.8L199.6 21.4L196.8 14.6L192.4 20.4L191.0 12.4L186.2 20.1L181.6 14.6L177.9 18.8L171.4 13.2L169.0 20.7L165.3 14.8L161.9 19.2L156.6 12.7L152.3 19.9L147.9 12.8L147.2 20.0L143.5 12.7L136.0 19.1L133.0 12.6L131.4 21.6L125.4 14.0L120.0 21.3L116.5 13.5L113.4 20.9L111.0 12.3L106.8 19.9L102.0 13.2L99.9 20.7L94.7 12.3L88.4 20.4L85.7 13.9L83.8 20.2L77.6 13.7L75.5 20.6L70.7 13.0L67.6 19.7L64.3 12.8L59.2 20.4L56.1 14.4L52.8 20.8L49.2 14.5L43.5 20.7L39.6 14.2L36.6 20.8L31.7 14.8L25.3 19.8L23.5 12.3L19.9 21.6L15.1 13.0L11.5 21.4L9.7 13.2L4.0 19.2L-0.5 13.1M277.9 7.5L286.2 7.5M277.9 7.5L282.6 13.1L275.2 14.3L279.5 20.8L270.7 20.7L264.1 20.8L256.6 20.1L247.4 20.9L241.6 19.4L230.4 20.6L225.9 21.4L214.8 20.6L207.1 20.4L199.6 21.4L192.4 20.4L186.2 20.1L177.9 18.8L169.0 20.7L161.9 19.2L152.3 19.9L147.2 20.0L136.0 19.1L131.4 21.6L120.0 21.3L113.4 20.9L106.8 19.9L99.9 20.7L88.4 20.4L83.8 20.2L75.5 20.6L67.6 19.7L59.2 20.4L52.8 20.8L43.5 20.7L36.6 20.8L25.3 19.8L19.9 21.6L11.5 21.4L4.0 19.2L0.1 26.5L7.6 28.3L4.0 19.2M11.5 21.4L7.6 28.3L14.4 26.0L11.5 21.4M19.9 21.6L14.4 26.0L21.4 28.0L19.9 21.6M25.3 19.8L21.4 28.0L33.6 26.2L25.3 19.8M36.6 20.8L33.6 26.2L38.3 26.1L36.6 20.8M43.5 20.7L38.3 26.1L47.6 27.0L43.5 20.7M52.8 20.8L47.6 27.0L56.5 26.1L52.8 20.8M59.2 20.4L56.5 26.1L64.6 26.9L59.2 20.4M67.6 19.7L64.6 26.9L72.1 27.9L67.6 19.7M75.5 20.6L72.1 27.9L80.5 27.0L75.5 20.6M83.8 20.2L80.5 27.0L87.0 27.2L83.8 20.2M88.4 20.4L87.0 27.2L93.0 27.0L88.4 20.4M99.9 20.7L93.0 27.0L104.1 28.2L99.9 20.7M106.8 19.9L104.1 28.2L108.0 27.5L106.8 19.9M113.4 20.9L108.0 27.5L117.2 25.9L113.4 20.9M120.0 21.3L117.2 25.9L124.2 27.9L120.0 21.3M131.4 21.6L124.2 27.9L135.7 27.1L131.4 21.6M136.0 19.1L135.7 27.1L141.0 27.0L136.0 19.1M147.2 20.0L141.0 27.0L150.9 27.7L147.2 20.0M152.3 19.9L150.9 27.7L155.4 26.1L152.3 19.9M161.9 19.2L155.4 26.1L166.8 27.0L161.9 19.2M169.0 20.7L166.8 27.0L173.7 27.8L169.0 20.7M177.9 18.8L173.7 27.8L181.5 27.7L177.9 18.8M186.2 20.1L181.5 27.7L189.0 26.2L186.2 20.1M192.4 20.4L189.0 26.2L195.2 28.5L192.4 20.4M199.6 21.4L195.2 28.5L202.3 27.6L199.6 21.4M207.1 20.4L202.3 27.6L214.0 26.2L207.1 20.4M214.8 20.6L214.0 26.2L218.2 26.7L214.8 20.6M225.9 21.4L218.2 26.7L227.3 26.9L225.9 21.4M230.4 20.6L227.3 26.9L235.6 28.3L230.4 20.6M241.6 19.4L235.6 28.3L242.1 28.3L241.6 19.4M247.4 20.9L242.1 28.3L249.7 28.3L247.4 20.9M256.6 20.1L249.7 28.3L258.8 27.7L256.6 20.1M264.1 20.8L258.8 27.7L265.2 26.8L264.1 20.8M270.7 20.7L265.2 26.8L276.0 27.4L270.7 20.7M279.5 20.8L276.0 27.4L271.4 32.5L265.2 26.8L263.6 35.2L258.8 27.7L256.3 33.8L249.7 28.3L249.4 34.6L242.1 28.3L239.3 32.8L235.6 28.3L234.0 34.6L227.3 26.9L222.0 32.4L218.2 26.7L214.5 34.6L214.0 26.2L207.5 32.6L202.3 27.6L199.3 34.4L195.2 28.5L194.4 32.6L189.0 26.2L186.3 32.8L181.5 27.7L178.7 33.8L173.7 27.8L167.8 33.9L166.8 27.0L160.2 34.0L155.4 26.1L153.0 33.7L150.9 27.7L147.5 35.1L141.0 27.0L138.8 32.5L135.7 27.1L129.4 34.1L124.2 27.9L123.0 33.7L117.2 25.9L112.2 32.5L108.0 27.5L107.5 35.1L104.1 28.2L97.4 33.3L93.0 27.0L90.9 34.4L87.0 27.2L80.9 33.0L80.5 27.0L73.8 33.2L72.1 27.9L68.6 34.3L64.6 26.9L60.0 34.0L56.5 26.1L50.3 33.0L47.6 27.0L41.3 33.0L38.3 26.1L34.2 34.2L33.6 26.2L27.2 33.0L21.4 28.0L17.6 34.7L14.4 26.0L11.4 34.1L7.6 28.3L5.3 32.7L0.1 26.5M279.5 20.8L282.6 13.1M279.5 20.8L287.1 19.2M279.5 20.8L283.2 26.5L276.0 27.4L277.3 34.0L271.4 32.5L263.6 35.2L256.3 33.8L249.4 34.6L239.3 32.8L234.0 34.6L222.0 32.4L214.5 34.6L207.5 32.6L199.3 34.4L194.4 32.6L186.3 32.8L178.7 33.8L167.8 33.9L160.2 34.0L153.0 33.7L147.5 35.1L138.8 32.5L129.4 34.1L123.0 33.7L112.2 32.5L107.5 35.1L97.4 33.3L90.9 34.4L80.9 33.0L73.8 33.2L68.6 34.3L60.0 34.0L50.3 33.0L41.3 33.0L34.2 34.2L27.2 33.0L17.6 34.7L11.4 34.1L5.3 32.7L1.0 40.5L8.4 40.5L5.3 32.7M11.4 34.1L8.4 40.5L16.8 40.5L11.4 34.1M17.6 34.7L16.8 40.5L22.7 40.5L17.6 34.7M27.2 33.0L22.7 40.5L30.9 40.5L27.2 33.0M34.2 34.2L30.9 40.5L38.3 40.5L34.2 34.2M41.3 33.0L38.3 40.5L46.6 40.5L41.3 33.0M50.3 33.0L46.6 40.5L54.0 40.5L50.3 33.0M60.0 34.0L54.0 40.5L64.4 40.5L60.0 34.0M68.6 34.3L64.4 40.5L69.2 40.5L68.6 34.3M73.8 33.2L69.2 40.5L77.4 40.5L73.8 33.2M80.9 33.0L77.4 40.5L87.5 40.5L80.9 33.0M90.9 34.4L87.5 40.5L93.9 40.5L90.9 34.4M97.4 33.3L93.9 40.5L101.5 40.5L97.4 33.3M107.5 35.1L101.5 40.5L112.2 40.5L107.5 35.1M112.2 32.5L112.2 40.5L119.7 40.5L112.2 32.5M123.0 33.7L119.7 40.5L124.6 40.5L123.0 33.7M129.4 34.1L124.6 40.5L132.2 40.5L129.4 34.1M138.8 32.5L132.2 40.5L141.5 40.5L138.8 32.5M147.5 35.1L141.5 40.5L149.8 40.5L147.5 35.1M153.0 33.7L149.8 40.5L156.6 40.5L153.0 33.7M160.2 34.0L156.6 40.5L165.6 40.5L160.2 34.0M167.8 33.9L165.6 40.5L173.8 40.5L167.8 33.9M178.7 33.8L173.8 40.5L182.3 40.5L178.7 33.8M186.3 32.8L182.3 40.5L187.6 40.5L186.3 32.8M194.4 32.6L187.6 40.5L197.3 40.5L194.4 32.6M199.3 34.4L197.3 40.5L202.5 40.5L199.3 34.4M207.5 32.6L202.5 40.5L210.4 40.5L207.5 32.6M214.5 34.6L210.4 40.5L218.3 40.5L214.5 34.6M222.0 32.4L218.3 40.5L226.4 40.5L222.0 32.4M234.0 34.6L226.4 40.5L237.2 40.5L234.0 34.6M239.3 32.8L237.2 40.5L243.2 40.5L239.3 32.8M249.4 34.6L243.2 40.5L251.6 40.5L249.4 34.6M256.3 33.8L251.6 40.5L259.3 40.5L256.3 33.8M263.6 35.2L259.3 40.5L266.1 40.5L263.6 35.2M271.4 32.5L266.1 40.5L273.3 40.5L271.4 32.5M277.3 34.0L273.3 40.5L273.3 47.4L266.1 40.5L264.2 48.6L259.3 40.5L256.0 46.6L251.6 40.5L248.7 46.4L243.2 40.5L238.4 46.5L237.2 40.5L231.4 47.9L226.4 40.5L217.4 47.4L210.4 40.5L210.1 49.0L202.5 40.5L200.5 47.0L197.3 40.5L193.3 46.6L187.6 40.5L185.7 47.1L182.3 40.5L177.2 49.1L173.8 40.5L171.0 46.3L165.6 40.5L159.0 47.0L156.6 40.5L152.7 46.8L149.8 40.5L144.5 48.5L141.5 40.5L138.0 46.3L132.2 40.5L129.8 48.5L124.6 40.5L119.9 46.6L112.2 40.5L107.4 46.3L101.5 40.5L98.8 47.2L93.9 40.5L88.6 48.8L87.5 40.5L83.4 48.0L77.4 40.5L74.2 48.8L69.2 40.5L66.3 46.3L64.4 40.5L61.0 46.3L54.0 40.5L51.5 49.1L46.6 40.5L43.6 48.1L38.3 40.5L35.4 47.5L30.9 40.5L28.4 47.4L22.7 40.5L18.6 48.6L16.8 40.5L11.1 47.5L8.4 40.5L2.5 49.0L1.0 40.5M277.3 34.0L283.2 26.5M277.3 34.0L288.4 32.7M277.3 34.0L284.1 40.5L273.3 40.5L278.7 47.5L273.3 47.4L264.2 48.6L256.0 46.6L248.7 46.4L238.4 46.5L231.4 47.9L225.4 49.4L226.4 40.5M112.2 40.5L112.7 48.7L107.4 46.3L98.8 47.2L88.6 48.8L83.4 48.0L74.2 48.8L66.3 46.3L61.0 46.3L51.5 49.1L43.6 48.1L35.4 47.5L28.4 47.4L18.6 48.6L11.1 47.5L2.5 49.0L0.9 56.1L6.2 54.6L2.5 49.0M119.7 40.5L119.9 46.6L112.7 48.7L112.3 54.2L107.4 46.3L101.2 53.8L98.8 47.2L93.0 55.6L88.6 48.8L87.9 54.8L83.4 48.0L78.8 54.4L74.2 48.8L69.2 54.2L66.3 46.3L61.4 55.3L61.0 46.3L56.3 56.4L51.5 49.1L47.2 54.7L43.6 48.1L38.9 56.4L35.4 47.5L33.6 53.8L28.4 47.4L24.6 56.6L18.6 48.6L13.8 54.3L11.1 47.5L6.2 54.6L13.8 54.3L24.6 56.6L33.6 53.8L38.9 56.4L47.2 54.7L56.3 56.4L61.4 55.3L69.2 54.2L78.8 54.4L87.9 54.8L93.0 55.6L101.2 53.8L112.3 54.2L116.3 55.1L112.7 48.7M218.3 40.5L217.4 47.4L210.1 49.0L200.5 47.0L193.3 46.6L185.7 47.1L177.2 49.1L171.0 46.3L159.0 47.0L152.7 46.8L144.5 48.5L138.0 46.3L129.8 48.5L119.9 46.6L116.3 55.1L123.6 56.1L119.9 46.6M129.8 48.5L123.6 56.1L131.8 53.7L129.8 48.5M138.0 46.3L131.8 53.7L143.6 55.3L138.0 46.3M144.5 48.5L143.6 55.3L151.3 56.5L144.5 48.5M152.7 46.8L151.3 56.5L158.3 53.7L152.7 46.8M159.0 47.0L158.3 53.7L165.8 53.8L159.0 47.0M171.0 46.3L165.8 53.8L170.9 56.3L171.0 46.3M177.2 49.1L170.9 56.3L180.0 56.0L177.2 49.1M185.7 47.1L180.0 56.0L188.9 56.1L185.7 47.1M193.3 46.6L188.9 56.1L197.2 56.7L193.3 46.6M200.5 47.0L197.2 56.7L204.4 56.3L200.5 47.0M210.1 49.0L204.4 56.3L213.8 55.5L210.1 49.0M217.4 47.4L225.4 49.4L220.2 55.0L217.4 47.4L213.8 55.5L220.2 55.0L228.7 54.2L225.4 49.4M231.4 47.9L228.7 54.2L235.7 55.7L231.4 47.9M238.4 46.5L235.7 55.7L243.0 54.3L238.4 46.5M248.7 46.4L243.0 54.3L249.9 56.2L248.7 46.4M256.0 46.6L249.9 56.2L261.2 56.3L256.0 46.6M264.2 48.6L261.2 56.3L268.3 55.5L264.2 48.6M273.3 47.4L268.3 55.5L273.3 56.4L273.3 47.4M278.7 47.5L273.3 56.4L271.7 62.5L268.3 55.5L262.0 62.5L261.2 56.3L255.5 62.5L249.9 56.2L247.0 62.5L243.0 54.3L241.4 62.5L235.7 55.7L233.4 62.5L228.7 54.2L225.7 62.5L220.2 55.0L216.1 62.5L213.8 55.5L209.8 62.5L204.4 56.3L201.2 62.5L197.2 56.7L192.3 62.5L188.9 56.1L183.2 62.5L180.0 56.0L175.6 62.5L170.9 56.3L168.8 62.5L165.8 53.8L162.2 62.5L158.3 53.7L155.5 62.5L151.3 56.5L144.8 62.5L143.6 55.3L135.5 62.5L131.8 53.7L127.8 62.5L123.6 56.1L121.5 62.5L116.3 55.1L112.6 62.5L112.3 54.2L105.2 62.5L101.2 53.8L97.3 62.5L93.0 55.6L88.6 62.5L87.9 54.8L82.6 62.5L78.8 54.4L73.5 62.5L69.2 54.2L67.5 62.5L61.4 55.3L59.1 62.5L56.3 56.4L52.0 62.5L47.2 54.7L45.3 62.5L38.9 56.4L33.8 62.5L33.6 53.8L28.6 62.5L24.6 56.6L18.0 62.5L13.8 54.3L12.6 62.5L6.2 54.6L3.8 62.5L0.9 56.1M278.7 47.5L284.1 40.5M278.7 47.5L285.7 49.0M278.7 47.5L284.0 56.1L273.3 56.4L277.2 62.5L271.7 62.5L262.0 62.5L255.5 62.5L247.0 62.5L241.4 62.5L233.4 62.5L225.7 62.5L216.1 62.5L209.8 62.5L201.2 62.5L192.3 62.5L183.2 62.5L175.6 62.5L168.8 62.5L162.2 62.5L155.5 62.5L144.8 62.5L135.5 62.5L127.8 62.5L121.5 62.5L112.6 62.5L105.2 62.5L97.3 62.5L88.6 62.5L82.6 62.5L73.5 62.5L67.5 62.5L59.1 62.5L52.0 62.5L45.3 62.5L33.8 62.5L28.6 62.5L18.0 62.5L12.6 62.5L3.8 62.5L-0.1 68.7L7.8 68.8L3.8 62.5M12.6 62.5L7.8 68.8L13.5 69.5L12.6 62.5M18.0 62.5L13.5 69.5L23.3 69.9L18.0 62.5M28.6 62.5L23.3 69.9L29.8 69.8L28.6 62.5M33.8 62.5L29.8 69.8L38.4 68.4L33.8 62.5M45.3 62.5L38.4 68.4L46.8 70.3L45.3 62.5M52.0 62.5L46.8 70.3L54.2 70.5L52.0 62.5M59.1 62.5L54.2 70.5L64.2 68.2L59.1 62.5M67.5 62.5L64.2 68.2L69.5 69.1L67.5 62.5M73.5 62.5L69.5 69.1L79.1 69.8L73.5 62.5M82.6 62.5L79.1 69.8L86.8 68.4L82.6 62.5M88.6 62.5L86.8 68.4L93.4 68.7L88.6 62.5M97.3 62.5L93.4 68.7L103.3 70.4L97.3 62.5M105.2 62.5L103.3 70.4L109.2 71.0L105.2 62.5M112.6 62.5L109.2 71.0L116.4 68.2L112.6 62.5M121.5 62.5L116.4 68.2L125.3 70.3L121.5 62.5M127.8 62.5L125.3 70.3L135.7 69.8L127.8 62.5M135.5 62.5L135.7 69.8L140.0 70.1L135.5 62.5M144.8 62.5L140.0 70.1L147.3 70.8L144.8 62.5M155.5 62.5L147.3 70.8L156.5 68.5L155.5 62.5M162.2 62.5L156.5 68.5L163.6 70.9L162.2 62.5M168.8 62.5L163.6 70.9L174.8 68.8L168.8 62.5M175.6 62.5L174.8 68.8L183.2 62.5L183.1 71.0L174.8 68.8L170.7 76.4L163.6 70.9L161.7 76.5L156.5 68.5L152.3 76.1L147.3 70.8L146.5 76.0L140.0 70.1L136.0 77.7L135.7 69.8L128.6 76.4L125.3 70.3L122.6 77.5L116.4 68.2L112.8 76.9L109.2 71.0L104.4 77.7L103.3 70.4L98.3 75.8L93.4 68.7L91.0 77.5L86.8 68.4L84.2 77.8L79.1 69.8L75.2 77.3L69.5 69.1L64.8 77.2L64.2 68.2L57.2 76.0L54.2 70.5L50.5 78.6L46.8 70.3L43.4 75.8L38.4 68.4L37.4 77.1L29.8 69.8L29.5 77.7L23.3 69.9L18.0 78.3L13.5 69.5L13.9 76.6L7.8 68.8L3.6 78.8L-0.1 68.7M183.2 62.5L188.0 68.3L192.3 62.5L195.1 69.6L201.2 62.5L203.2 68.8L209.8 62.5L211.3 71.0L216.1 62.5L218.2 71.2L225.7 62.5L227.8 70.6L233.4 62.5L236.0 71.2L241.4 62.5L242.4 69.0L247.0 62.5L251.7 69.8L255.5 62.5L258.8 69.2L262.0 62.5L265.6 69.8L271.7 62.5L276.7 71.0L277.2 62.5L284.0 56.1M277.2 62.5L286.9 62.5M277.2 62.5L283.0 68.7L276.7 71.0L265.6 69.8L258.8 69.2L251.7 69.8L242.4 69.0L236.0 71.2L227.8 70.6L218.2 71.2L211.3 71.0L203.2 68.8L195.1 69.6L188.0 68.3L183.1 71.0L177.6 77.6L174.8 68.8M183.1 71.0L186.8 77.9L188.0 68.3L194.6 77.5L195.1 69.6L198.4 76.6L203.2 68.8L209.5 76.7L211.3 71.0L217.0 76.0L218.2 71.2L224.8 76.8L227.8 70.6L234.0 75.8L236.0 71.2L239.3 78.1L242.4 69.0L247.3 77.1L251.7 69.8L254.9 75.9L258.8 69.2L262.7 78.4L265.6 69.8L272.5 76.6L276.7 71.0L279.9 78.2L272.5 76.6L262.7 78.4L254.9 75.9L247.3 77.1L239.3 78.1L234.0 75.8L224.8 76.8L217.0 76.0L209.5 76.7L198.4 76.6L194.6 77.5L186.8 77.9L177.6 77.6L170.7 76.4L161.7 76.5L152.3 76.1L146.5 76.0L136.0 77.7L128.6 76.4L122.6 77.5L112.8 76.9L104.4 77.7L98.3 75.8L91.0 77.5L84.2 77.8L75.2 77.3L64.8 77.2L57.2 76.0L50.5 78.6L43.4 75.8L37.4 77.1L29.5 77.7L18.0 78.3L13.9 76.6L3.6 78.8L1.3 84.5L5.9 84.5L3.6 78.8M13.9 76.6L5.9 84.5L14.2 84.5L13.9 76.6M18.0 78.3L14.2 84.5L25.6 84.5L18.0 78.3M29.5 77.7L25.6 84.5L30.5 84.5L29.5 77.7M37.4 77.1L30.5 84.5L40.5 84.5L37.4 77.1M43.4 75.8L40.5 84.5L47.8 84.5L43.4 75.8M50.5 78.6L47.8 84.5L56.7 84.5L50.5 78.6M57.2 76.0L56.7 84.5L61.1 84.5L57.2 76.0M64.8 77.2L61.1 84.5L72.7 84.5L64.8 77.2M75.2 77.3L72.7 84.5L80.3 84.5L75.2 77.3M84.2 77.8L80.3 84.5L85.4 84.5L84.2 77.8M91.0 77.5L85.4 84.5L95.3 84.5L91.0 77.5M98.3 75.8L95.3 84.5L100.1 84.5L98.3 75.8M104.4 77.7L100.1 84.5L111.7 84.5L104.4 77.7M112.8 76.9L111.7 84.5L117.6 84.5L112.8 76.9M122.6 77.5L117.6 84.5L126.9 84.5L122.6 77.5M128.6 76.4L126.9 84.5L135.0 84.5L128.6 76.4M136.0 77.7L135.0 84.5L139.5 84.5L136.0 77.7M146.5 76.0L139.5 84.5L151.1 84.5L146.5 76.0M152.3 76.1L151.1 84.5L155.6 84.5L152.3 76.1M161.7 76.5L155.6 84.5L163.6 84.5L161.7 76.5M170.7 76.4L163.6 84.5L172.8 84.5L170.7 76.4M177.6 77.6L172.8 84.5L179.8 84.5L177.6 77.6M186.8 77.9L179.8 84.5L189.4 84.5L186.8 77.9M194.6 77.5L189.4 84.5L195.3 84.5L194.6 77.5M198.4 76.6L195.3 84.5L205.0 84.5L198.4 76.6M209.5 76.7L205.0 84.5L213.5 84.5L209.5 76.7M217.0 76.0L213.5 84.5L222.3 84.5L217.0 76.0M224.8 76.8L222.3 84.5L227.6 84.5L224.8 76.8M234.0 75.8L227.6 84.5L235.0 84.5L234.0 75.8M239.3 78.1L235.0 84.5L244.1 84.5L239.3 78.1M247.3 77.1L244.1 84.5L252.3 84.5L247.3 77.1M254.9 75.9L252.3 84.5L261.4 84.5L254.9 75.9M262.7 78.4L261.4 84.5L267.8 84.5L262.7 78.4M272.5 76.6L267.8 84.5L275.0 84.5L272.5 76.6M279.9 78.2L275.0 84.5L284.4 84.5L279.9 78.2L283.0 68.7M279.9 78.2L286.7 78.8" fill="none"/><path id="mp" d="M1.2 0.0L8.5 0.0L14.5 0.0L20.8 0.0L27.1 0.0L35.7 0.0L43.0 0.0L48.8 0.0L56.0 0.0L67.1 0.0L72.9 0.0L78.5 0.0L86.5 0.0L82.5 6.9L78.5 0.0L75.7 5.3L72.9 0.0L66.7 6.1L67.1 0.0L59.5 6.6L56.0 0.0L48.5 5.3L43.0 0.0L38.0 6.5L35.7 0.0L31.6 7.1L27.1 0.0L23.5 6.2L20.8 0.0L18.1 6.5L14.5 0.0L12.2 5.8L8.5 0.0L5.5 7.1L1.2 0.0L0.8 12.0L5.5 7.1L12.2 5.8L18.1 6.5L23.5 6.2L31.6 7.1L38.0 6.5L48.5 5.3L48.8 0.0M56.0 0.0L55.8 7.1L48.5 5.3L44.8 11.8L38.0 6.5L37.9 11.0L31.6 7.1L27.9 10.8L23.5 6.2L21.7 12.2L18.1 6.5L13.7 12.9L12.2 5.8L8.4 11.4L5.5 7.1M86.5 0.0L89.7 5.1L82.5 6.9L75.7 5.3L66.7 6.1L59.5 6.6L55.8 7.1L52.5 11.9L48.5 5.3M55.8 7.1L59.6 12.3L59.5 6.6L64.0 12.8L66.7 6.1L73.0 12.6L75.7 5.3L79.4 11.4L82.5 6.9L87.4 11.1L89.7 5.1L90.1 18.6L87.4 11.1L79.4 11.4L73.0 12.6L64.0 12.8L59.6 12.3L52.5 11.9L44.8 11.8L37.9 11.0L27.9 10.8L21.7 12.2L13.7 12.9L8.4 11.4L0.8 12.0L4.4 18.6L8.4 11.4L10.3 19.0L13.7 12.9L16.8 17.9L21.7 12.2L26.5 17.9L27.9 10.8L33.4 18.5L37.9 11.0L41.6 19.5L44.8 11.8L47.9 19.0L52.5 11.9L52.8 18.8L59.6 12.3L62.9 17.9L64.0 12.8L68.9 18.2L73.0 12.6L77.8 17.7L79.4 11.4L82.8 16.9L87.4 11.1M89.7 5.1L91.1 31.1L90.1 18.6L82.8 16.9L77.8 17.7L68.9 18.2L62.9 17.9L52.8 18.8L47.9 19.0L41.6 19.5L33.4 18.5L26.5 17.9L16.8 17.9L10.3 19.0L4.4 18.6L1.8 25.4L0.8 12.0L1.8 36.1L1.8 25.4L6.5 25.6L4.4 18.6M10.3 19.0L6.5 25.6L13.2 25.1L10.3 19.0M16.8 17.9L13.2 25.1L20.3 24.0L16.8 17.9M26.5 17.9L20.3 24.0L27.2 25.2L26.5 17.9M33.4 18.5L27.2 25.2L37.5 23.3L33.4 18.5M41.6 19.5L37.5 23.3L43.5 23.6L41.6 19.5M47.9 19.0L43.5 23.6L50.6 24.4L47.9 19.0M52.8 18.8L50.6 24.4L56.3 25.3L52.8 18.8M62.9 17.9L56.3 25.3L64.2 24.1L62.9 17.9M68.9 18.2L64.2 24.1L70.5 23.0L68.9 18.2M77.8 17.7L70.5 23.0L78.3 23.9L77.8 17.7M82.8 16.9L78.3 23.9L88.5 25.3L82.8 16.9M90.1 18.6L88.5 25.3L82.6 30.1L78.3 23.9L77.5 29.9L70.5 23.0L67.6 30.6L64.2 24.1L60.3 29.1L56.3 25.3L52.8 29.6L50.6 24.4L45.0 29.1L43.5 23.6L40.6 30.9L37.5 23.3L33.5 30.4L27.2 25.2L24.9 30.6L20.3 24.0L17.4 31.1L13.2 25.1L11.5 31.3L6.5 25.6L3.5 30.2L1.8 25.4M88.5 25.3L91.1 31.1L82.6 30.1L77.5 29.9L67.6 30.6L60.3 29.1L52.8 29.6L45.0 29.1L40.6 30.9L33.5 30.4L24.9 30.6L17.4 31.1L11.5 31.3L3.5 30.2L1.8 36.1L8.1 36.0L3.5 30.2M11.5 31.3L8.1 36.0L15.8 35.7L11.5 31.3M17.4 31.1L15.8 35.7L23.2 36.4L17.4 31.1M24.9 30.6L23.2 36.4L29.8 36.5L24.9 30.6M33.5 30.4L29.8 36.5L35.4 36.4L33.5 30.4M40.6 30.9L35.4 36.4L41.6 35.2L40.6 30.9M45.0 29.1L41.6 35.2L50.8 36.4L45.0 29.1M52.8 29.6L50.8 36.4L59.2 35.1L52.8 29.6M60.3 29.1L59.2 35.1L65.3 36.4L60.3 29.1M67.6 30.6L65.3 36.4L72.7 37.0L67.6 30.6M77.5 29.9L72.7 37.0L79.7 36.6L77.5 29.9M82.6 30.1L79.7 36.6L86.8 36.7L82.6 30.1M91.1 31.1L86.8 36.7L81.2 42.5L79.7 36.6L74.1 42.5L72.7 37.0L67.7 42.5L65.3 36.4L61.3 42.5L59.2 35.1L53.4 42.5L50.8 36.4L48.9 42.5L41.6 35.2L40.8 42.5L35.4 36.4L34.5 42.5L29.8 36.5L24.1 42.5L23.2 36.4L18.8 42.5L15.8 35.7L11.1 42.5L8.1 36.0L2.6 42.5L1.8 36.1M91.1 31.1L89.4 42.5L86.8 36.7M2.6 42.5L11.1 42.5L18.8 42.5L24.1 42.5L34.5 42.5L40.8 42.5L48.9 42.5L53.4 42.5L61.3 42.5L67.7 42.5L74.1 42.5L81.2 42.5L89.4 42.5" fill="none"/><pattern id="fg" width="2.6" height="1.8" patternUnits="userSpaceOnUse"><rect width="2.6" height="1.8" fill="#a9d0fc"/><path d="M0 0H2.6M0 0V1.8" stroke="#86aaff" stroke-opacity="0.55" stroke-width="0.7"/></pattern><pattern id="fc" width="3" height="5.45" patternUnits="userSpaceOnUse" patternTransform="translate(0,662.00)"><rect width="3" height="5.45" fill="#abcdfc"/><circle cx="1.5" cy="4.55" r="0.6" fill="#e8f6ff" fill-opacity="0.8"/></pattern><g id="cy"><rect x="0" y="0.45" width="25.7" height="3.3" fill="#e8dc86" stroke="#b8a060" stroke-width="0.7"/><path d="M4.0 0.75v2.7M9.0 0.75v2.7M12.8 0.95l2.6 2.6M17.0 3.65l3 -2.8M21.5 3.65l3 -2.8" stroke="#5c5418" stroke-opacity="0.6" stroke-width="0.8" fill="none"/><rect x="0" y="5.90" width="25.7" height="3.3" fill="#e8dc86" stroke="#b8a060" stroke-width="0.7"/><path d="M2.5 9.10l3 -2.8M7.8 6.40l2.6 2.6M14.0 6.20v2.7M17.0 9.10l3 -2.8M23.0 6.20v2.7" stroke="#5c5418" stroke-opacity="0.6" stroke-width="0.8" fill="none"/><rect x="0" y="11.35" width="25.7" height="3.3" fill="#e8dc86" stroke="#b8a060" stroke-width="0.7"/><path d="M2.5 14.55l3 -2.8M7.8 11.85l2.6 2.6M12.5 14.55l3 -2.8M18.5 11.65v2.7M21.5 14.55l3 -2.8" stroke="#5c5418" stroke-opacity="0.6" stroke-width="0.8" fill="none"/><rect x="0" y="16.80" width="25.7" height="3.3" fill="#e8dc86" stroke="#b8a060" stroke-width="0.7"/><path d="M4.0 17.10v2.7M7.8 17.30l2.6 2.6M12.8 17.30l2.6 2.6M17.3 17.30l2.6 2.6M21.5 20.00l3 -2.8" stroke="#5c5418" stroke-opacity="0.6" stroke-width="0.8" fill="none"/><rect x="0" y="22.25" width="25.7" height="3.3" fill="#e8dc86" stroke="#b8a060" stroke-width="0.7"/><path d="M2.8 22.75l2.6 2.6M7.5 25.45l3 -2.8M14.0 22.55v2.7M17.0 25.45l3 -2.8M21.5 25.45l3 -2.8" stroke="#5c5418" stroke-opacity="0.6" stroke-width="0.8" fill="none"/><rect x="0" y="27.70" width="25.7" height="3.3" fill="#e8dc86" stroke="#b8a060" stroke-width="0.7"/><path d="M2.5 30.90l3 -2.8M7.8 28.20l2.6 2.6M14.0 28.00v2.7M17.3 28.20l2.6 2.6M23.0 28.00v2.7" stroke="#5c5418" stroke-opacity="0.6" stroke-width="0.8" fill="none"/><rect x="0" y="33.15" width="25.7" height="3.3" fill="#e8dc86" stroke="#b8a060" stroke-width="0.7"/><path d="M2.5 36.35l3 -2.8M7.8 33.65l2.6 2.6M14.0 33.45v2.7M17.3 33.65l2.6 2.6M21.5 36.35l3 -2.8" stroke="#5c5418" stroke-opacity="0.6" stroke-width="0.8" fill="none"/><rect x="0" y="38.60" width="25.7" height="3.3" fill="#e8dc86" stroke="#b8a060" stroke-width="0.7"/><path d="M2.5 41.80l3 -2.8M7.8 39.10l2.6 2.6M12.8 39.10l2.6 2.6M17.3 39.10l2.6 2.6M21.5 41.80l3 -2.8" stroke="#5c5418" stroke-opacity="0.6" stroke-width="0.8" fill="none"/></g><g id="co"><rect x="0" y="0.45" width="25.7" height="3.3" fill="#f3ac8c" stroke="#c89070" stroke-width="0.7"/><path d="M2.5 3.65l3 -2.8M9.0 0.75v2.7M12.8 0.95l2.6 2.6M17.3 0.95l2.6 2.6M23.0 0.75v2.7" stroke="#6a3420" stroke-opacity="0.6" stroke-width="0.8" fill="none"/><rect x="0" y="5.90" width="25.7" height="3.3" fill="#f3ac8c" stroke="#c89070" stroke-width="0.7"/><path d="M4.0 6.20v2.7M9.0 6.20v2.7M14.0 6.20v2.7M17.0 9.10l3 -2.8M21.5 9.10l3 -2.8" stroke="#6a3420" stroke-opacity="0.6" stroke-width="0.8" fill="none"/><rect x="0" y="11.35" width="25.7" height="3.3" fill="#f3ac8c" stroke="#c89070" stroke-width="0.7"/><path d="M2.5 14.55l3 -2.8M9.0 11.65v2.7M12.8 11.85l2.6 2.6M17.3 11.85l2.6 2.6M21.5 14.55l3 -2.8" stroke="#6a3420" stroke-opacity="0.6" stroke-width="0.8" fill="none"/><rect x="0" y="16.80" width="25.7" height="3.3" fill="#f3ac8c" stroke="#c89070" stroke-width="0.7"/><path d="M4.0 17.10v2.7M9.0 17.10v2.7M12.8 17.30l2.6 2.6M18.5 17.10v2.7M21.8 17.30l2.6 2.6" stroke="#6a3420" stroke-opacity="0.6" stroke-width="0.8" fill="none"/><rect x="0" y="22.25" width="25.7" height="3.3" fill="#f3ac8c" stroke="#c89070" stroke-width="0.7"/><path d="M2.8 22.75l2.6 2.6M9.0 22.55v2.7M12.5 25.45l3 -2.8M17.0 25.45l3 -2.8M21.5 25.45l3 -2.8" stroke="#6a3420" stroke-opacity="0.6" stroke-width="0.8" fill="none"/><rect x="0" y="27.70" width="25.7" height="3.3" fill="#f3ac8c" stroke="#c89070" stroke-width="0.7"/><path d="M4.0 28.00v2.7M7.8 28.20l2.6 2.6M14.0 28.00v2.7M17.0 30.90l3 -2.8M21.5 30.90l3 -2.8" stroke="#6a3420" stroke-opacity="0.6" stroke-width="0.8" fill="none"/><rect x="0" y="33.15" width="25.7" height="3.3" fill="#f3ac8c" stroke="#c89070" stroke-width="0.7"/><path d="M4.0 33.45v2.7M7.5 36.35l3 -2.8M12.8 33.65l2.6 2.6M17.0 36.35l3 -2.8M21.8 33.65l2.6 2.6" stroke="#6a3420" stroke-opacity="0.6" stroke-width="0.8" fill="none"/><rect x="0" y="38.60" width="25.7" height="3.3" fill="#f3ac8c" stroke="#c89070" stroke-width="0.7"/><path d="M2.8 39.10l2.6 2.6M9.0 38.90v2.7M14.0 38.90v2.7M17.0 41.80l3 -2.8M23.0 38.90v2.7" stroke="#6a3420" stroke-opacity="0.6" stroke-width="0.8" fill="none"/></g><clipPath id="clipAll"><rect x="530.5" y="564.5" width="1132.5" height="237.5"/></clipPath><clipPath id="clipAir"><rect x="636.7" y="605.0" width="70.8" height="156.0"/><rect x="919.8" y="605.0" width="70.8" height="156.0"/><rect x="1202.9" y="605.0" width="70.8" height="156.0"/><rect x="1486.0" y="605.0" width="70.8" height="156.0"/></clipPath><clipPath id="clipSol"><rect x="530.5" y="564.5" width="1132.5" height="40.5"/><rect x="530.5" y="761.0" width="1132.5" height="41.0"/><rect x="530.5" y="605.0" width="106.2" height="156.0"/><rect x="707.5" y="605.0" width="212.3" height="156.0"/><rect x="990.6" y="605.0" width="212.3" height="156.0"/><rect x="1273.7" y="605.0" width="212.3" height="156.0"/><rect x="1556.8" y="605.0" width="106.2" height="156.0"/></clipPath><clipPath id="clipMag"><rect x="530.5" y="605.0" width="106.2" height="156.0"/><rect x="707.5" y="605.0" width="212.3" height="156.0"/><rect x="990.6" y="605.0" width="212.3" height="156.0"/><rect x="1273.7" y="605.0" width="212.3" height="156.0"/><rect x="1556.8" y="605.0" width="106.2" height="156.0"/></clipPath></defs><rect x="530.5" y="564.5" width="1132.5" height="40.5" fill="#ececec"/><rect x="530.5" y="761.0" width="1132.5" height="41.0" fill="#ececec"/><rect x="530.5" y="605.0" width="1132.5" height="156.0" fill="#ccfeff"/><rect x="530.5" y="605.0" width="106.2" height="22.0" fill="#fcc8c8"/><rect x="530.5" y="627.0" width="106.2" height="22.0" fill="#c6c6fc"/><rect x="530.5" y="717.0" width="106.2" height="22.0" fill="#fcc8c8"/><rect x="530.5" y="739.0" width="106.2" height="22.0" fill="#c6c6fc"/><rect x="707.5" y="605.0" width="212.3" height="22.0" fill="#c6c6fc"/><rect x="707.5" y="627.0" width="212.3" height="22.0" fill="#fcc8c8"/><rect x="707.5" y="717.0" width="212.3" height="22.0" fill="#c6c6fc"/><rect x="707.5" y="739.0" width="212.3" height="22.0" fill="#fcc8c8"/><rect x="990.6" y="605.0" width="212.3" height="22.0" fill="#fcc8c8"/><rect x="990.6" y="627.0" width="212.3" height="22.0" fill="#c6c6fc"/><rect x="990.6" y="717.0" width="212.3" height="22.0" fill="#fcc8c8"/><rect x="990.6" y="739.0" width="212.3" height="22.0" fill="#c6c6fc"/><rect x="1273.7" y="605.0" width="212.3" height="22.0" fill="#c6c6fc"/><rect x="1273.7" y="627.0" width="212.3" height="22.0" fill="#fcc8c8"/><rect x="1273.7" y="717.0" width="212.3" height="22.0" fill="#c6c6fc"/><rect x="1273.7" y="739.0" width="212.3" height="22.0" fill="#fcc8c8"/><rect x="1556.8" y="605.0" width="106.2" height="22.0" fill="#fcc8c8"/><rect x="1556.8" y="627.0" width="106.2" height="22.0" fill="#c6c6fc"/><rect x="1556.8" y="717.0" width="106.2" height="22.0" fill="#fcc8c8"/><rect x="1556.8" y="739.0" width="106.2" height="22.0" fill="#c6c6fc"/><g clip-path="url(#clipSol)" stroke="#6868ff" stroke-opacity="0.38" stroke-width="1.05"><use href="#mt" transform="translate(530.50,564.5)"/><use href="#mt" transform="translate(530.50,802.0) scale(1,-1)"/><use href="#mt" transform="translate(813.62,564.5)"/><use href="#mt" transform="translate(813.62,802.0) scale(1,-1)"/><use href="#mt" transform="translate(1096.75,564.5)"/><use href="#mt" transform="translate(1096.75,802.0) scale(1,-1)"/><use href="#mt" transform="translate(1379.88,564.5)"/><use href="#mt" transform="translate(1379.88,802.0) scale(1,-1)"/></g><g clip-path="url(#clipMag)" stroke="#6868ff" stroke-opacity="0.2" stroke-width="1"><use href="#mt" transform="translate(391.94,567.0)"/><use href="#mt" transform="translate(391.94,799.5) scale(1,-1)"/><use href="#mt" transform="translate(675.06,567.0)"/><use href="#mt" transform="translate(675.06,799.5) scale(1,-1)"/><use href="#mt" transform="translate(958.19,567.0)"/><use href="#mt" transform="translate(958.19,799.5) scale(1,-1)"/><use href="#mt" transform="translate(1241.31,567.0)"/><use href="#mt" transform="translate(1241.31,799.5) scale(1,-1)"/><use href="#mt" transform="translate(1524.44,567.0)"/><use href="#mt" transform="translate(1524.44,799.5) scale(1,-1)"/></g><g clip-path="url(#clipAir)" stroke="#6a96ff" stroke-opacity="0.46" stroke-width="1.05"><use href="#mt" transform="translate(530.50,564.5)"/><use href="#mt" transform="translate(530.50,802.0) scale(1,-1)"/><use href="#mt" transform="translate(813.62,564.5)"/><use href="#mt" transform="translate(813.62,802.0) scale(1,-1)"/><use href="#mt" transform="translate(1096.75,564.5)"/><use href="#mt" transform="translate(1096.75,802.0) scale(1,-1)"/><use href="#mt" transform="translate(1379.88,564.5)"/><use href="#mt" transform="translate(1379.88,802.0) scale(1,-1)"/></g><g clip-path="url(#clipAll)" stroke="#6a96ff" stroke-opacity="0.42" stroke-width="1"><use href="#mp" transform="translate(483.49,662.0)"/><use href="#mp" transform="translate(860.99,662.0)"/><use href="#mp" transform="translate(1238.48,662.0)"/><use href="#mp" transform="translate(1615.98,662.0)"/></g><rect x="530.5" y="649.0" width="1132.5" height="13.0" fill="url(#fg)"/><rect x="530.5" y="704.5" width="1132.5" height="12.5" fill="url(#fg)"/><path d="M530.5 656.2H1663.0M530.5 709.8H1663.0" stroke="#9ad6c8" stroke-opacity="0.7" stroke-width="1"/><rect x="572.0" y="662.0" width="295.5" height="42.5" fill="url(#fc)"/><use href="#cy" transform="translate(574.01,662.0)"/><use href="#cy" transform="translate(603.54,662.0)"/><use href="#cy" transform="translate(633.08,662.0)"/><use href="#cy" transform="translate(662.61,662.0)"/><use href="#cy" transform="translate(692.13,662.0)"/><use href="#co" transform="translate(721.66,662.0)"/><use href="#co" transform="translate(751.19,662.0)"/><use href="#co" transform="translate(780.73,662.0)"/><use href="#co" transform="translate(810.25,662.0)"/><use href="#co" transform="translate(839.78,662.0)"/><rect x="949.5" y="662.0" width="295.5" height="42.5" fill="url(#fc)"/><use href="#cy" transform="translate(951.51,662.0)"/><use href="#cy" transform="translate(981.04,662.0)"/><use href="#cy" transform="translate(1010.58,662.0)"/><use href="#cy" transform="translate(1040.11,662.0)"/><use href="#cy" transform="translate(1069.63,662.0)"/><use href="#co" transform="translate(1099.16,662.0)"/><use href="#co" transform="translate(1128.69,662.0)"/><use href="#co" transform="translate(1158.22,662.0)"/><use href="#co" transform="translate(1187.76,662.0)"/><use href="#co" transform="translate(1217.28,662.0)"/><rect x="1327.0" y="662.0" width="295.5" height="42.5" fill="url(#fc)"/><use href="#cy" transform="translate(1329.01,662.0)"/><use href="#cy" transform="translate(1358.54,662.0)"/><use href="#cy" transform="translate(1388.07,662.0)"/><use href="#cy" transform="translate(1417.60,662.0)"/><use href="#cy" transform="translate(1447.13,662.0)"/><use href="#co" transform="translate(1476.66,662.0)"/><use href="#co" transform="translate(1506.19,662.0)"/><use href="#co" transform="translate(1535.72,662.0)"/><use href="#co" transform="translate(1565.25,662.0)"/><use href="#co" transform="translate(1594.78,662.0)"/><path d="M530.5 564.5H1663.0M530.5 802.0H1663.0" stroke="#f08088" stroke-width="1.6"/><path d="M530.5 564.5V802.0M1663.0 564.5V802.0" stroke="#a0a0f8" stroke-opacity="0.8" stroke-width="1"/><path d="M636.7 605.0H707.5M636.7 761.0H707.5M919.8 605.0H990.6M919.8 761.0H990.6M1202.9 605.0H1273.7M1202.9 761.0H1273.7M1486.0 605.0H1556.8M1486.0 761.0H1556.8" stroke="#e8909c" stroke-width="1"/><path d="M530.5 605.0H636.7V649.0H530.5" fill="none" stroke="#de6678" stroke-width="0.95"/><path d="M538.6 633.0V620.7m-2.6 5l2.6 -5l2.6 5M538.6 648.0V634.5m-2.6 5l2.6 -5l2.6 5M553.5 633.0V620.7m-2.6 5l2.6 -5l2.6 5M553.5 648.0V634.5m-2.6 5l2.6 -5l2.6 5M568.4 633.0V620.7m-2.6 5l2.6 -5l2.6 5M568.4 648.0V634.5m-2.6 5l2.6 -5l2.6 5M583.3 633.0V620.7m-2.6 5l2.6 -5l2.6 5M583.3 648.0V634.5m-2.6 5l2.6 -5l2.6 5M598.2 633.0V620.7m-2.6 5l2.6 -5l2.6 5M598.2 648.0V634.5m-2.6 5l2.6 -5l2.6 5M613.1 633.0V620.7m-2.6 5l2.6 -5l2.6 5M613.1 648.0V634.5m-2.6 5l2.6 -5l2.6 5M628.0 633.0V620.7m-2.6 5l2.6 -5l2.6 5M628.0 648.0V634.5m-2.6 5l2.6 -5l2.6 5" fill="none" stroke="#a06a5a" stroke-opacity="0.2" stroke-width="1"/><path d="M530.5 717.0H636.7V761.0H530.5" fill="none" stroke="#de6678" stroke-width="0.95"/><path d="M538.6 745.0V732.7m-2.6 5l2.6 -5l2.6 5M538.6 760.0V746.5m-2.6 5l2.6 -5l2.6 5M553.5 745.0V732.7m-2.6 5l2.6 -5l2.6 5M553.5 760.0V746.5m-2.6 5l2.6 -5l2.6 5M568.4 745.0V732.7m-2.6 5l2.6 -5l2.6 5M568.4 760.0V746.5m-2.6 5l2.6 -5l2.6 5M583.3 745.0V732.7m-2.6 5l2.6 -5l2.6 5M583.3 760.0V746.5m-2.6 5l2.6 -5l2.6 5M598.2 745.0V732.7m-2.6 5l2.6 -5l2.6 5M598.2 760.0V746.5m-2.6 5l2.6 -5l2.6 5M613.1 745.0V732.7m-2.6 5l2.6 -5l2.6 5M613.1 760.0V746.5m-2.6 5l2.6 -5l2.6 5M628.0 745.0V732.7m-2.6 5l2.6 -5l2.6 5M628.0 760.0V746.5m-2.6 5l2.6 -5l2.6 5" fill="none" stroke="#a06a5a" stroke-opacity="0.2" stroke-width="1"/><path d="M707.5 605.0H919.8V649.0H707.5Z" fill="none" stroke="#de6678" stroke-width="0.95"/><path d="M715.1 606.5V619.3m-2.6 -5l2.6 5l2.6 -5M715.1 621.0V633.7m-2.6 -5l2.6 5l2.6 -5M730.0 606.5V619.3m-2.6 -5l2.6 5l2.6 -5M730.0 621.0V633.7m-2.6 -5l2.6 5l2.6 -5M744.9 606.5V619.3m-2.6 -5l2.6 5l2.6 -5M744.9 621.0V633.7m-2.6 -5l2.6 5l2.6 -5M759.8 606.5V619.3m-2.6 -5l2.6 5l2.6 -5M759.8 621.0V633.7m-2.6 -5l2.6 5l2.6 -5M774.7 606.5V619.3m-2.6 -5l2.6 5l2.6 -5M774.7 621.0V633.7m-2.6 -5l2.6 5l2.6 -5M789.6 606.5V619.3m-2.6 -5l2.6 5l2.6 -5M789.6 621.0V633.7m-2.6 -5l2.6 5l2.6 -5M804.5 606.5V619.3m-2.6 -5l2.6 5l2.6 -5M804.5 621.0V633.7m-2.6 -5l2.6 5l2.6 -5M819.4 606.5V619.3m-2.6 -5l2.6 5l2.6 -5M819.4 621.0V633.7m-2.6 -5l2.6 5l2.6 -5M834.3 606.5V619.3m-2.6 -5l2.6 5l2.6 -5M834.3 621.0V633.7m-2.6 -5l2.6 5l2.6 -5M849.2 606.5V619.3m-2.6 -5l2.6 5l2.6 -5M849.2 621.0V633.7m-2.6 -5l2.6 5l2.6 -5M864.1 606.5V619.3m-2.6 -5l2.6 5l2.6 -5M864.1 621.0V633.7m-2.6 -5l2.6 5l2.6 -5M879.0 606.5V619.3m-2.6 -5l2.6 5l2.6 -5M879.0 621.0V633.7m-2.6 -5l2.6 5l2.6 -5M893.9 606.5V619.3m-2.6 -5l2.6 5l2.6 -5M893.9 621.0V633.7m-2.6 -5l2.6 5l2.6 -5M908.8 606.5V619.3m-2.6 -5l2.6 5l2.6 -5M908.8 621.0V633.7m-2.6 -5l2.6 5l2.6 -5" fill="none" stroke="#a06a5a" stroke-opacity="0.2" stroke-width="1"/><path d="M707.5 717.0H919.8V761.0H707.5Z" fill="none" stroke="#de6678" stroke-width="0.95"/><path d="M715.1 718.5V731.3m-2.6 -5l2.6 5l2.6 -5M715.1 733.0V745.7m-2.6 -5l2.6 5l2.6 -5M730.0 718.5V731.3m-2.6 -5l2.6 5l2.6 -5M730.0 733.0V745.7m-2.6 -5l2.6 5l2.6 -5M744.9 718.5V731.3m-2.6 -5l2.6 5l2.6 -5M744.9 733.0V745.7m-2.6 -5l2.6 5l2.6 -5M759.8 718.5V731.3m-2.6 -5l2.6 5l2.6 -5M759.8 733.0V745.7m-2.6 -5l2.6 5l2.6 -5M774.7 718.5V731.3m-2.6 -5l2.6 5l2.6 -5M774.7 733.0V745.7m-2.6 -5l2.6 5l2.6 -5M789.6 718.5V731.3m-2.6 -5l2.6 5l2.6 -5M789.6 733.0V745.7m-2.6 -5l2.6 5l2.6 -5M804.5 718.5V731.3m-2.6 -5l2.6 5l2.6 -5M804.5 733.0V745.7m-2.6 -5l2.6 5l2.6 -5M819.4 718.5V731.3m-2.6 -5l2.6 5l2.6 -5M819.4 733.0V745.7m-2.6 -5l2.6 5l2.6 -5M834.3 718.5V731.3m-2.6 -5l2.6 5l2.6 -5M834.3 733.0V745.7m-2.6 -5l2.6 5l2.6 -5M849.2 718.5V731.3m-2.6 -5l2.6 5l2.6 -5M849.2 733.0V745.7m-2.6 -5l2.6 5l2.6 -5M864.1 718.5V731.3m-2.6 -5l2.6 5l2.6 -5M864.1 733.0V745.7m-2.6 -5l2.6 5l2.6 -5M879.0 718.5V731.3m-2.6 -5l2.6 5l2.6 -5M879.0 733.0V745.7m-2.6 -5l2.6 5l2.6 -5M893.9 718.5V731.3m-2.6 -5l2.6 5l2.6 -5M893.9 733.0V745.7m-2.6 -5l2.6 5l2.6 -5M908.8 718.5V731.3m-2.6 -5l2.6 5l2.6 -5M908.8 733.0V745.7m-2.6 -5l2.6 5l2.6 -5" fill="none" stroke="#a06a5a" stroke-opacity="0.2" stroke-width="1"/><path d="M990.6 605.0H1202.9V649.0H990.6Z" fill="none" stroke="#de6678" stroke-width="0.95"/><path d="M998.2 633.0V620.7m-2.6 5l2.6 -5l2.6 5M998.2 648.0V634.5m-2.6 5l2.6 -5l2.6 5M1013.1 633.0V620.7m-2.6 5l2.6 -5l2.6 5M1013.1 648.0V634.5m-2.6 5l2.6 -5l2.6 5M1028.0 633.0V620.7m-2.6 5l2.6 -5l2.6 5M1028.0 648.0V634.5m-2.6 5l2.6 -5l2.6 5M1042.9 633.0V620.7m-2.6 5l2.6 -5l2.6 5M1042.9 648.0V634.5m-2.6 5l2.6 -5l2.6 5M1057.8 633.0V620.7m-2.6 5l2.6 -5l2.6 5M1057.8 648.0V634.5m-2.6 5l2.6 -5l2.6 5M1072.7 633.0V620.7m-2.6 5l2.6 -5l2.6 5M1072.7 648.0V634.5m-2.6 5l2.6 -5l2.6 5M1087.6 633.0V620.7m-2.6 5l2.6 -5l2.6 5M1087.6 648.0V634.5m-2.6 5l2.6 -5l2.6 5M1102.5 633.0V620.7m-2.6 5l2.6 -5l2.6 5M1102.5 648.0V634.5m-2.6 5l2.6 -5l2.6 5M1117.4 633.0V620.7m-2.6 5l2.6 -5l2.6 5M1117.4 648.0V634.5m-2.6 5l2.6 -5l2.6 5M1132.3 633.0V620.7m-2.6 5l2.6 -5l2.6 5M1132.3 648.0V634.5m-2.6 5l2.6 -5l2.6 5M1147.2 633.0V620.7m-2.6 5l2.6 -5l2.6 5M1147.2 648.0V634.5m-2.6 5l2.6 -5l2.6 5M1162.1 633.0V620.7m-2.6 5l2.6 -5l2.6 5M1162.1 648.0V634.5m-2.6 5l2.6 -5l2.6 5M1177.0 633.0V620.7m-2.6 5l2.6 -5l2.6 5M1177.0 648.0V634.5m-2.6 5l2.6 -5l2.6 5M1191.9 633.0V620.7m-2.6 5l2.6 -5l2.6 5M1191.9 648.0V634.5m-2.6 5l2.6 -5l2.6 5" fill="none" stroke="#a06a5a" stroke-opacity="0.2" stroke-width="1"/><path d="M990.6 717.0H1202.9V761.0H990.6Z" fill="none" stroke="#de6678" stroke-width="0.95"/><path d="M998.2 745.0V732.7m-2.6 5l2.6 -5l2.6 5M998.2 760.0V746.5m-2.6 5l2.6 -5l2.6 5M1013.1 745.0V732.7m-2.6 5l2.6 -5l2.6 5M1013.1 760.0V746.5m-2.6 5l2.6 -5l2.6 5M1028.0 745.0V732.7m-2.6 5l2.6 -5l2.6 5M1028.0 760.0V746.5m-2.6 5l2.6 -5l2.6 5M1042.9 745.0V732.7m-2.6 5l2.6 -5l2.6 5M1042.9 760.0V746.5m-2.6 5l2.6 -5l2.6 5M1057.8 745.0V732.7m-2.6 5l2.6 -5l2.6 5M1057.8 760.0V746.5m-2.6 5l2.6 -5l2.6 5M1072.7 745.0V732.7m-2.6 5l2.6 -5l2.6 5M1072.7 760.0V746.5m-2.6 5l2.6 -5l2.6 5M1087.6 745.0V732.7m-2.6 5l2.6 -5l2.6 5M1087.6 760.0V746.5m-2.6 5l2.6 -5l2.6 5M1102.5 745.0V732.7m-2.6 5l2.6 -5l2.6 5M1102.5 760.0V746.5m-2.6 5l2.6 -5l2.6 5M1117.4 745.0V732.7m-2.6 5l2.6 -5l2.6 5M1117.4 760.0V746.5m-2.6 5l2.6 -5l2.6 5M1132.3 745.0V732.7m-2.6 5l2.6 -5l2.6 5M1132.3 760.0V746.5m-2.6 5l2.6 -5l2.6 5M1147.2 745.0V732.7m-2.6 5l2.6 -5l2.6 5M1147.2 760.0V746.5m-2.6 5l2.6 -5l2.6 5M1162.1 745.0V732.7m-2.6 5l2.6 -5l2.6 5M1162.1 760.0V746.5m-2.6 5l2.6 -5l2.6 5M1177.0 745.0V732.7m-2.6 5l2.6 -5l2.6 5M1177.0 760.0V746.5m-2.6 5l2.6 -5l2.6 5M1191.9 745.0V732.7m-2.6 5l2.6 -5l2.6 5M1191.9 760.0V746.5m-2.6 5l2.6 -5l2.6 5" fill="none" stroke="#a06a5a" stroke-opacity="0.2" stroke-width="1"/><path d="M1273.7 605.0H1486.0V649.0H1273.7Z" fill="none" stroke="#de6678" stroke-width="0.95"/><path d="M1281.3 606.5V619.3m-2.6 -5l2.6 5l2.6 -5M1281.3 621.0V633.7m-2.6 -5l2.6 5l2.6 -5M1296.2 606.5V619.3m-2.6 -5l2.6 5l2.6 -5M1296.2 621.0V633.7m-2.6 -5l2.6 5l2.6 -5M1311.1 606.5V619.3m-2.6 -5l2.6 5l2.6 -5M1311.1 621.0V633.7m-2.6 -5l2.6 5l2.6 -5M1326.0 606.5V619.3m-2.6 -5l2.6 5l2.6 -5M1326.0 621.0V633.7m-2.6 -5l2.6 5l2.6 -5M1340.9 606.5V619.3m-2.6 -5l2.6 5l2.6 -5M1340.9 621.0V633.7m-2.6 -5l2.6 5l2.6 -5M1355.8 606.5V619.3m-2.6 -5l2.6 5l2.6 -5M1355.8 621.0V633.7m-2.6 -5l2.6 5l2.6 -5M1370.7 606.5V619.3m-2.6 -5l2.6 5l2.6 -5M1370.7 621.0V633.7m-2.6 -5l2.6 5l2.6 -5M1385.6 606.5V619.3m-2.6 -5l2.6 5l2.6 -5M1385.6 621.0V633.7m-2.6 -5l2.6 5l2.6 -5M1400.5 606.5V619.3m-2.6 -5l2.6 5l2.6 -5M1400.5 621.0V633.7m-2.6 -5l2.6 5l2.6 -5M1415.4 606.5V619.3m-2.6 -5l2.6 5l2.6 -5M1415.4 621.0V633.7m-2.6 -5l2.6 5l2.6 -5M1430.3 606.5V619.3m-2.6 -5l2.6 5l2.6 -5M1430.3 621.0V633.7m-2.6 -5l2.6 5l2.6 -5M1445.2 606.5V619.3m-2.6 -5l2.6 5l2.6 -5M1445.2 621.0V633.7m-2.6 -5l2.6 5l2.6 -5M1460.1 606.5V619.3m-2.6 -5l2.6 5l2.6 -5M1460.1 621.0V633.7m-2.6 -5l2.6 5l2.6 -5M1475.0 606.5V619.3m-2.6 -5l2.6 5l2.6 -5M1475.0 621.0V633.7m-2.6 -5l2.6 5l2.6 -5" fill="none" stroke="#a06a5a" stroke-opacity="0.2" stroke-width="1"/><path d="M1273.7 717.0H1486.0V761.0H1273.7Z" fill="none" stroke="#de6678" stroke-width="0.95"/><path d="M1281.3 718.5V731.3m-2.6 -5l2.6 5l2.6 -5M1281.3 733.0V745.7m-2.6 -5l2.6 5l2.6 -5M1296.2 718.5V731.3m-2.6 -5l2.6 5l2.6 -5M1296.2 733.0V745.7m-2.6 -5l2.6 5l2.6 -5M1311.1 718.5V731.3m-2.6 -5l2.6 5l2.6 -5M1311.1 733.0V745.7m-2.6 -5l2.6 5l2.6 -5M1326.0 718.5V731.3m-2.6 -5l2.6 5l2.6 -5M1326.0 733.0V745.7m-2.6 -5l2.6 5l2.6 -5M1340.9 718.5V731.3m-2.6 -5l2.6 5l2.6 -5M1340.9 733.0V745.7m-2.6 -5l2.6 5l2.6 -5M1355.8 718.5V731.3m-2.6 -5l2.6 5l2.6 -5M1355.8 733.0V745.7m-2.6 -5l2.6 5l2.6 -5M1370.7 718.5V731.3m-2.6 -5l2.6 5l2.6 -5M1370.7 733.0V745.7m-2.6 -5l2.6 5l2.6 -5M1385.6 718.5V731.3m-2.6 -5l2.6 5l2.6 -5M1385.6 733.0V745.7m-2.6 -5l2.6 5l2.6 -5M1400.5 718.5V731.3m-2.6 -5l2.6 5l2.6 -5M1400.5 733.0V745.7m-2.6 -5l2.6 5l2.6 -5M1415.4 718.5V731.3m-2.6 -5l2.6 5l2.6 -5M1415.4 733.0V745.7m-2.6 -5l2.6 5l2.6 -5M1430.3 718.5V731.3m-2.6 -5l2.6 5l2.6 -5M1430.3 733.0V745.7m-2.6 -5l2.6 5l2.6 -5M1445.2 718.5V731.3m-2.6 -5l2.6 5l2.6 -5M1445.2 733.0V745.7m-2.6 -5l2.6 5l2.6 -5M1460.1 718.5V731.3m-2.6 -5l2.6 5l2.6 -5M1460.1 733.0V745.7m-2.6 -5l2.6 5l2.6 -5M1475.0 718.5V731.3m-2.6 -5l2.6 5l2.6 -5M1475.0 733.0V745.7m-2.6 -5l2.6 5l2.6 -5" fill="none" stroke="#a06a5a" stroke-opacity="0.2" stroke-width="1"/><path d="M1663.0 605.0H1556.8V649.0H1663.0" fill="none" stroke="#de6678" stroke-width="0.95"/><path d="M1564.4 633.0V620.7m-2.6 5l2.6 -5l2.6 5M1564.4 648.0V634.5m-2.6 5l2.6 -5l2.6 5M1579.3 633.0V620.7m-2.6 5l2.6 -5l2.6 5M1579.3 648.0V634.5m-2.6 5l2.6 -5l2.6 5M1594.2 633.0V620.7m-2.6 5l2.6 -5l2.6 5M1594.2 648.0V634.5m-2.6 5l2.6 -5l2.6 5M1609.1 633.0V620.7m-2.6 5l2.6 -5l2.6 5M1609.1 648.0V634.5m-2.6 5l2.6 -5l2.6 5M1624.0 633.0V620.7m-2.6 5l2.6 -5l2.6 5M1624.0 648.0V634.5m-2.6 5l2.6 -5l2.6 5M1638.9 633.0V620.7m-2.6 5l2.6 -5l2.6 5M1638.9 648.0V634.5m-2.6 5l2.6 -5l2.6 5M1653.8 633.0V620.7m-2.6 5l2.6 -5l2.6 5M1653.8 648.0V634.5m-2.6 5l2.6 -5l2.6 5" fill="none" stroke="#a06a5a" stroke-opacity="0.2" stroke-width="1"/><path d="M1663.0 717.0H1556.8V761.0H1663.0" fill="none" stroke="#de6678" stroke-width="0.95"/><path d="M1564.4 745.0V732.7m-2.6 5l2.6 -5l2.6 5M1564.4 760.0V746.5m-2.6 5l2.6 -5l2.6 5M1579.3 745.0V732.7m-2.6 5l2.6 -5l2.6 5M1579.3 760.0V746.5m-2.6 5l2.6 -5l2.6 5M1594.2 745.0V732.7m-2.6 5l2.6 -5l2.6 5M1594.2 760.0V746.5m-2.6 5l2.6 -5l2.6 5M1609.1 745.0V732.7m-2.6 5l2.6 -5l2.6 5M1609.1 760.0V746.5m-2.6 5l2.6 -5l2.6 5M1624.0 745.0V732.7m-2.6 5l2.6 -5l2.6 5M1624.0 760.0V746.5m-2.6 5l2.6 -5l2.6 5M1638.9 745.0V732.7m-2.6 5l2.6 -5l2.6 5M1638.9 760.0V746.5m-2.6 5l2.6 -5l2.6 5M1653.8 745.0V732.7m-2.6 5l2.6 -5l2.6 5M1653.8 760.0V746.5m-2.6 5l2.6 -5l2.6 5" fill="none" stroke="#a06a5a" stroke-opacity="0.2" stroke-width="1"/><path d="M530.5 809H1662.5" stroke="#d8d8d8" stroke-width="1.4" fill="none"/><path d="M531.0 808.3v5.8M625.3 808.3v5.8M719.5 808.3v5.8M813.8 808.3v5.8M908.1 808.3v5.8M1002.4 808.3v5.8M1096.7 808.3v5.8M1190.9 808.3v5.8M1285.2 808.3v5.8M1379.5 808.3v5.8M1473.8 808.3v5.8M1568.0 808.3v5.8M1662.3 808.3v5.8" stroke="#bcbcbc" stroke-width="1" fill="none"/><text x="530.7" y="824" text-anchor="middle" font-family="Liberation Sans" font-size="13" fill="#909090">0°</text><text x="625.0" y="824" text-anchor="middle" font-family="Liberation Sans" font-size="13" fill="#909090">10°</text><text x="719.2" y="824" text-anchor="middle" font-family="Liberation Sans" font-size="13" fill="#909090">20°</text><text x="813.5" y="824" text-anchor="middle" font-family="Liberation Sans" font-size="13" fill="#909090">30°</text><text x="907.8" y="824" text-anchor="middle" font-family="Liberation Sans" font-size="13" fill="#909090">40°</text><text x="1002.1" y="824" text-anchor="middle" font-family="Liberation Sans" font-size="13" fill="#909090">50°</text><text x="1096.4" y="824" text-anchor="middle" font-family="Liberation Sans" font-size="13" fill="#909090">60°</text><text x="1190.6" y="824" text-anchor="middle" font-family="Liberation Sans" font-size="13" fill="#909090">70°</text><text x="1284.9" y="824" text-anchor="middle" font-family="Liberation Sans" font-size="13" fill="#909090">80°</text><text x="1379.2" y="824" text-anchor="middle" font-family="Liberation Sans" font-size="13" fill="#909090">90°</text><text x="1473.5" y="824" text-anchor="middle" font-family="Liberation Sans" font-size="13" fill="#909090">100°</text><text x="1567.7" y="824" text-anchor="middle" font-family="Liberation Sans" font-size="13" fill="#909090">110°</text><text x="1662.0" y="824" text-anchor="middle" font-family="Liberation Sans" font-size="13" fill="#909090">120°</text></svg>
<div class="cb" style="left:1532px;top:1164px;background:#0a5fbf"></div><svg class="abs" style="left:1532px;top:1164px" width="16" height="16" viewBox="0 0 16 16"><path d="M4 8.4L6.8 11L11.8 5.4" fill="none" stroke="#fff" stroke-width="1.2"/></svg>
<div class="t" style="left:1555px;top:1164px;letter-spacing:-0.05px">Show subdomains with material types</div>
<div class="abs" style="left:396px;top:1187px;width:1382px;height:6px;background:#dcdcdc"></div>
<div class="abs" style="left:0;top:1193px;width:1778px;height:7px;background:#f0f0f0"></div>
<div class="abs" style="left:1549px;top:1195px;width:1px;height:5px;background:#c8c8c8"></div>
<div class="abs" style="left:1758px;top:1195px;width:1px;height:5px;background:#c8c8c8"></div>
</div></body></html>
